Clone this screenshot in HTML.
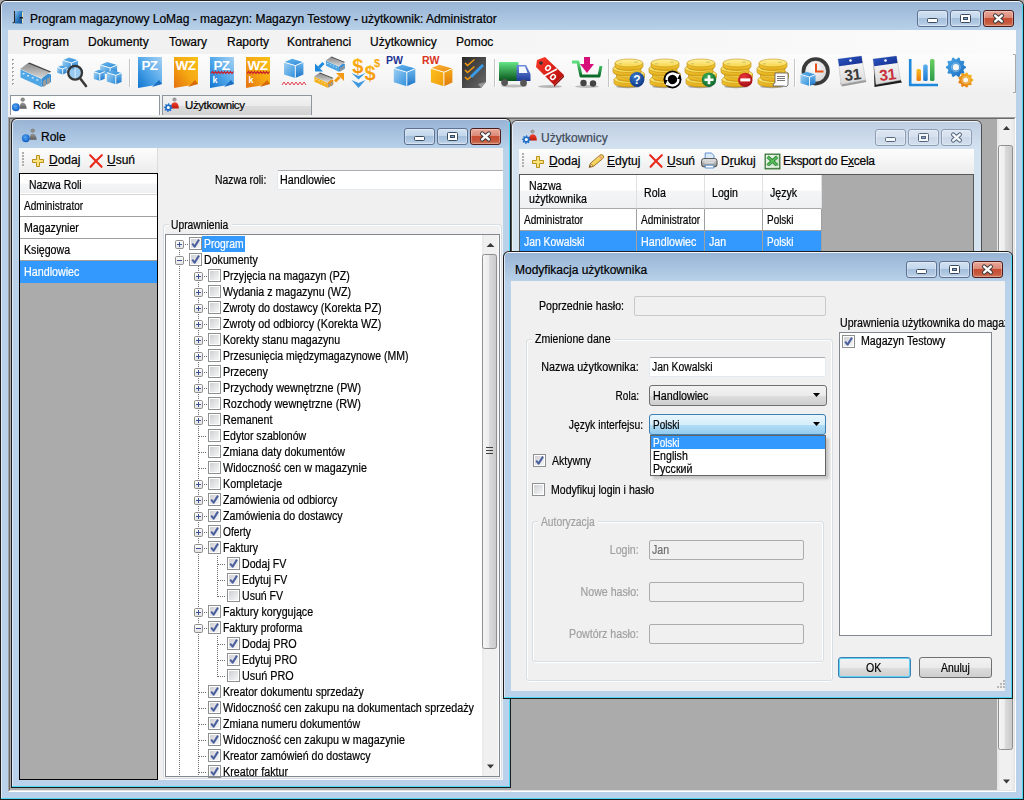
<!DOCTYPE html><html><head><meta charset="utf-8"><style>
*{margin:0;padding:0;box-sizing:border-box}
html,body{width:1024px;height:800px;overflow:hidden;background:#ababab}
body{position:relative;font-family:"Liberation Sans",sans-serif;font-size:12px;color:#000}
.a{position:absolute}
.t{position:absolute;white-space:nowrap;-webkit-text-stroke:0.2px currentColor}
svg{overflow:visible}
</style></head><body><div class="a" style="left:0px;top:0px;width:1024px;height:800px;background:#1e1e1e;border-radius:6px 6px 0 0"></div><div class="a" style="left:1px;top:1px;width:1022px;height:798px;background:linear-gradient(#98b4d5 0px,#b9d2ea 29px,#b9d1ea 100%);border-radius:5px 5px 0 0;border-top:1px solid #f4f8fc;border-left:1px solid #dfe9f5"></div><div class="a" style="left:1022px;top:4px;width:1px;height:795px;background:#4ad9f5"></div><div class="a" style="left:1px;top:798px;width:1022px;height:1px;background:#4ad9f5"></div><svg class="a" style="left:0px;top:0px" width="30" height="30" viewBox="0 0 30 30"><defs><linearGradient id="gApp" x1="0" y1="0" x2="1" y2="1"><stop offset="0" stop-color="#8cc4f4"/><stop offset=".5" stop-color="#2a78c0"/><stop offset="1" stop-color="#0a3f7a"/></linearGradient></defs><rect x="15" y="11" width="7.5" height="12.5" fill="url(#gApp)"/><rect x="22" y="12" width="1" height="11" fill="#e8e4b0"/><path d="M14.5 11V22.2Q14.3 23.2 12.6 22.6" fill="none" stroke="#2a2a2a" stroke-width="1.1"/><rect x="19.5" y="17" width="3.5" height="1.6" rx=".6" fill="#1a1a1a"/></svg><div class="t" style="left:30px;top:12.84px;font-size:12px;line-height:12px;;">Program magazynowy LoMag - magazyn: Magazyn Testowy - użytkownik: Administrator</div><div class="a" style="left:917px;top:10px;width:31px;height:17px;background:linear-gradient(#d3e2f2 0%,#c2d6ec 45%,#a4bfdc 50%,#b0c8e2 80%,#c7daee 100%);border:1px solid #5f7190;border-radius:3px;box-shadow:inset 0 0 0 1px rgba(255,255,255,.3)"></div><div class="a" style="left:950px;top:10px;width:31px;height:17px;background:linear-gradient(#d3e2f2 0%,#c2d6ec 45%,#a4bfdc 50%,#b0c8e2 80%,#c7daee 100%);border:1px solid #5f7190;border-radius:3px;box-shadow:inset 0 0 0 1px rgba(255,255,255,.3)"></div><div class="a" style="left:983px;top:10px;width:31px;height:17px;background:linear-gradient(#eaa99b 0%,#dc8a77 45%,#c84d33 50%,#c55a3f 80%,#d27a5c 100%);border:1px solid #4e1b1b;border-radius:3px;box-shadow:inset 0 0 0 1px rgba(255,255,255,.3)"></div><div class="a" style="left:927px;top:18px;width:11px;height:5px;background:#fff;border:1px solid #3c4a5e;border-radius:1.5px"></div><div class="a" style="left:960px;top:14px;width:11px;height:9px;background:#fff;border:1px solid #3c4a5e;border-radius:1.5px"></div><div class="a" style="left:963px;top:17px;width:5px;height:3px;background:#8aa6c8;border:1px solid #3c4a5e"></div><svg class="a" style="left:983px;top:10px" width="31" height="17" viewBox="0 0 31 17"><path d="M12.2 5.6 L18.8 11.4 M18.8 5.6 L12.2 11.4" stroke="#3a3a3a" stroke-width="4.4" stroke-linecap="round"/><path d="M12.2 5.6 L18.8 11.4 M18.8 5.6 L12.2 11.4" stroke="#fff" stroke-width="2.4" stroke-linecap="round"/></svg><div class="a" style="left:8px;top:30px;width:1008px;height:762px;background:#f0f0f0"></div><div class="a" style="left:8px;top:30px;width:1008px;height:24px;background:linear-gradient(90deg,#efefef,#fbfbfb)"></div><div class="t" style="left:23px;top:35.84px;font-size:12px;line-height:12px;;">Program</div><div class="t" style="left:88px;top:35.84px;font-size:12px;line-height:12px;;">Dokumenty</div><div class="t" style="left:169px;top:35.84px;font-size:12px;line-height:12px;;">Towary</div><div class="t" style="left:227px;top:35.84px;font-size:12px;line-height:12px;;">Raporty</div><div class="t" style="left:287px;top:35.84px;font-size:12px;line-height:12px;;">Kontrahenci</div><div class="t" style="left:370px;top:35.84px;font-size:12px;line-height:12px;;">Użytkownicy</div><div class="t" style="left:456px;top:35.84px;font-size:12px;line-height:12px;;">Pomoc</div><div class="a" style="left:8px;top:54px;width:1008px;height:39px;background:linear-gradient(#fcfcfc,#f8f8f8 45%,#f0f0f0)"></div><svg class="a" style="left:0;top:0" width="1024" height="100" viewBox="0 0 1024 100"><defs>
<linearGradient id="gBt" x1="0" y1="0" x2="1" y2="1"><stop offset="0" stop-color="#68b6ec"/><stop offset="1" stop-color="#2d8bd8"/></linearGradient>
<linearGradient id="gBl" x1="0" y1="0" x2="1" y2="1"><stop offset="0" stop-color="#9fd0f3"/><stop offset="1" stop-color="#2f8fdb"/></linearGradient>
<linearGradient id="gBr" x1="0" y1="0" x2="0" y2="1"><stop offset="0" stop-color="#6cb6ec"/><stop offset="1" stop-color="#1e76c8"/></linearGradient>
<linearGradient id="gOt" x1="0" y1="0" x2="1" y2="1"><stop offset="0" stop-color="#f7b53a"/><stop offset="1" stop-color="#ee8d12"/></linearGradient>
<linearGradient id="gOl" x1="0" y1="0" x2="1" y2="1"><stop offset="0" stop-color="#fbc21e"/><stop offset="1" stop-color="#f29a0c"/></linearGradient>
<linearGradient id="gOr" x1="0" y1="0" x2="0" y2="1"><stop offset="0" stop-color="#f6ab1c"/><stop offset="1" stop-color="#e07a08"/></linearGradient>
<linearGradient id="gRoof" x1="0" y1="0" x2="0" y2="1"><stop offset="0" stop-color="#8b8b8b"/><stop offset="1" stop-color="#d8d8d8"/></linearGradient>
<linearGradient id="gPZ" x1="1" y1="0" x2="0" y2="1"><stop offset="0" stop-color="#a6d2f4"/><stop offset=".5" stop-color="#54a8ea"/><stop offset="1" stop-color="#0f74d0"/></linearGradient>
<linearGradient id="gWZ" x1="1" y1="0" x2="0" y2="1"><stop offset="0" stop-color="#f9c01a"/><stop offset=".5" stop-color="#f5a812"/><stop offset="1" stop-color="#e57010"/></linearGradient>
<linearGradient id="gCoin" x1="0" y1="0" x2="0" y2="1"><stop offset="0" stop-color="#fff3a0"/><stop offset="1" stop-color="#f7d448"/></linearGradient><linearGradient id="gCoinS" x1="0" y1="0" x2="0" y2="1"><stop offset="0" stop-color="#f9d440"/><stop offset="1" stop-color="#e0a818"/></linearGradient>
<radialGradient id="gQ" cx=".4" cy=".3" r=".8"><stop offset="0" stop-color="#3a7ad0"/><stop offset="1" stop-color="#0a2f78"/></radialGradient>
<radialGradient id="gPlus" cx=".4" cy=".3" r=".8"><stop offset="0" stop-color="#3cb25a"/><stop offset="1" stop-color="#0a5a26"/></radialGradient>
<radialGradient id="gMinus" cx=".4" cy=".3" r=".8"><stop offset="0" stop-color="#e8333a"/><stop offset="1" stop-color="#9a0a10"/></radialGradient>
<linearGradient id="gTruck" x1="0" y1="0" x2="0" y2="1"><stop offset="0" stop-color="#64e584"/><stop offset="1" stop-color="#06531a"/></linearGradient>
<linearGradient id="gCab" x1="0" y1="0" x2="0" y2="1"><stop offset="0" stop-color="#6f8ee0"/><stop offset="1" stop-color="#1e3a9a"/></linearGradient>
<linearGradient id="gTag" x1="0" y1="0" x2="1" y2="1"><stop offset="0" stop-color="#ff3a2a"/><stop offset="1" stop-color="#b00a0a"/></linearGradient>
<linearGradient id="gCart" x1="0" y1="0" x2="0" y2="1"><stop offset="0" stop-color="#5ee07e"/><stop offset="1" stop-color="#0a6a28"/></linearGradient>
<linearGradient id="gCal" x1="0" y1="0" x2="0" y2="1"><stop offset="0" stop-color="#ffffff"/><stop offset="1" stop-color="#d8d8d8"/></linearGradient>
<linearGradient id="gCalT" x1="0" y1="0" x2="1" y2="1"><stop offset="0" stop-color="#2a5ac8"/><stop offset="1" stop-color="#152a88"/></linearGradient><radialGradient id="gClk" cx=".4" cy=".35" r=".7"><stop offset="0" stop-color="#ffffff"/><stop offset="1" stop-color="#d0d0d0"/></radialGradient>
<linearGradient id="gCk" x1="0" y1="0" x2="1" y2="1"><stop offset="0" stop-color="#2a2a2a"/><stop offset="1" stop-color="#6a6a6a"/></linearGradient>
<linearGradient id="gDol" x1="0" y1="0" x2="0" y2="1"><stop offset="0" stop-color="#ffc21a"/><stop offset="1" stop-color="#f08a0a"/></linearGradient>
<linearGradient id="gBarO" x1="0" y1="0" x2="0" y2="1"><stop offset="0" stop-color="#f8c020"/><stop offset="1" stop-color="#f07a10"/></linearGradient><linearGradient id="gBarB" x1="0" y1="0" x2="0" y2="1"><stop offset="0" stop-color="#5ab0f0"/><stop offset="1" stop-color="#1a78d0"/></linearGradient><linearGradient id="gBarG" x1="0" y1="0" x2="0" y2="1"><stop offset="0" stop-color="#6ad060"/><stop offset="1" stop-color="#2a9a4a"/></linearGradient>
<linearGradient id="gGb" x1="0" y1="0" x2="1" y2="1"><stop offset="0" stop-color="#4aa8e8"/><stop offset="1" stop-color="#1a6cc0"/></linearGradient><linearGradient id="gGo" x1="1" y1="0" x2="0" y2="1"><stop offset="0" stop-color="#f8c020"/><stop offset="1" stop-color="#e07010"/></linearGradient>
</defs><rect x="12" y="59" width="2" height="2" fill="#a5a5a5"/><rect x="13" y="60" width="1" height="1" fill="#fff"/><rect x="12" y="63" width="2" height="2" fill="#a5a5a5"/><rect x="13" y="64" width="1" height="1" fill="#fff"/><rect x="12" y="67" width="2" height="2" fill="#a5a5a5"/><rect x="13" y="68" width="1" height="1" fill="#fff"/><rect x="12" y="71" width="2" height="2" fill="#a5a5a5"/><rect x="13" y="72" width="1" height="1" fill="#fff"/><rect x="12" y="75" width="2" height="2" fill="#a5a5a5"/><rect x="13" y="76" width="1" height="1" fill="#fff"/><rect x="12" y="79" width="2" height="2" fill="#a5a5a5"/><rect x="13" y="80" width="1" height="1" fill="#fff"/><rect x="12" y="83" width="2" height="2" fill="#a5a5a5"/><rect x="13" y="84" width="1" height="1" fill="#fff"/><polygon points="20.5,69.5 41.5,79 41.5,87 20.5,77.5" fill="#4ea6e4"/><polygon points="41.5,79 46,73 51,74.5 51,82 41.5,87" fill="#3a8fd4"/><polygon points="20,69 27.5,63.5 50,72.5 41.5,78.5" fill="url(#gRoof)"/><polygon points="27.5,63.5 29.5,62.5 51,71.5 50,72.5" fill="#4a4a4a"/><rect x="22.5" y="73.0" width="2" height="1.3" fill="#dff0ff"/><rect x="27.1" y="75.1" width="2" height="1.3" fill="#dff0ff"/><rect x="31.7" y="77.2" width="2" height="1.3" fill="#dff0ff"/><rect x="36.3" y="79.3" width="2" height="1.3" fill="#dff0ff"/><polygon points="43,81 46,79.3 46,85.5 43,87" fill="#9a9a9a"/><polygon points="47,78.7 50,77 50,83 47,84.8" fill="#9a9a9a"/><polygon points="62.5,60.2 69.0,57.5 78.0,60.2 71.5,62.9" fill="url(#gBt)"/><polygon points="62.5,60.2 71.5,62.9 71.5,69.9 62.5,67.2" fill="url(#gBl)"/><polygon points="71.5,62.9 78.0,60.2 78.0,67.2 71.5,69.9" fill="url(#gBr)"/><polyline points="62.5,60.2 71.5,62.9 78.0,60.2" fill="none" stroke="#fff" stroke-width="0.9"/><line x1="71.5" y1="62.9" x2="71.5" y2="69.9" stroke="#fff" stroke-width="0.9"/><polygon points="57.2,67.3 61.2,65.6 66.7,67.2 62.7,68.9" fill="url(#gBt)"/><polygon points="57.2,67.3 62.7,68.9 62.7,74.4 57.2,72.8" fill="url(#gBl)"/><polygon points="62.7,68.9 66.7,67.2 66.7,72.8 62.7,74.4" fill="url(#gBr)"/><polyline points="57.2,67.3 62.7,68.9 66.7,67.2" fill="none" stroke="#fff" stroke-width="0.9"/><line x1="62.7" y1="68.9" x2="62.7" y2="74.4" stroke="#fff" stroke-width="0.9"/><circle cx="75.1" cy="72.7" r="6.9" fill="rgba(120,185,235,.75)"/><path d="M75.1 66V79.4" stroke="#fff" stroke-width=".8" opacity=".8"/><circle cx="75.1" cy="72.7" r="6.9" fill="none" stroke="#363636" stroke-width="2.3"/><path d="M80.6,79 L86,86" stroke="#3a3a3a" stroke-width="2.6" stroke-linecap="round"/><polygon points="100.1,64.9 107.1,62.0 117.1,65.0 110.1,67.9" fill="url(#gBt)"/><polygon points="100.1,64.9 110.1,67.9 110.1,74.9 100.1,71.9" fill="url(#gBl)"/><polygon points="110.1,67.9 117.1,65.0 117.1,72.0 110.1,74.9" fill="url(#gBr)"/><polyline points="100.1,64.9 110.1,67.9 117.1,65.0" fill="none" stroke="#fff" stroke-width="0.9"/><line x1="110.1" y1="67.9" x2="110.1" y2="74.9" stroke="#fff" stroke-width="0.9"/><polygon points="93.8,71.9 98.8,69.8 104.8,71.6 99.8,73.7" fill="url(#gBt)"/><polygon points="93.8,71.9 99.8,73.7 99.8,80.8 93.8,79.0" fill="url(#gBl)"/><polygon points="99.8,73.7 104.8,71.6 104.8,78.7 99.8,80.8" fill="url(#gBr)"/><polyline points="93.8,71.9 99.8,73.7 104.8,71.6" fill="none" stroke="#fff" stroke-width="0.9"/><line x1="99.8" y1="73.7" x2="99.8" y2="80.8" stroke="#fff" stroke-width="0.9"/><polygon points="106.8,72.6 112.6,70.2 121.6,72.9 115.8,75.3" fill="url(#gBt)"/><polygon points="106.8,72.6 115.8,75.3 115.8,84.3 106.8,81.6" fill="url(#gBl)"/><polygon points="115.8,75.3 121.6,72.9 121.6,81.9 115.8,84.3" fill="url(#gBr)"/><polyline points="106.8,72.6 115.8,75.3 121.6,72.9" fill="none" stroke="#fff" stroke-width="0.9"/><line x1="115.8" y1="75.3" x2="115.8" y2="84.3" stroke="#fff" stroke-width="0.9"/><rect x="129" y="59" width="1" height="28" fill="#c4c4c4"/><rect x="130" y="59" width="1" height="28" fill="#fff"/><rect x="494" y="59" width="1" height="28" fill="#c4c4c4"/><rect x="495" y="59" width="1" height="28" fill="#fff"/><rect x="608" y="59" width="1" height="28" fill="#c4c4c4"/><rect x="609" y="59" width="1" height="28" fill="#fff"/><rect x="794" y="59" width="1" height="28" fill="#c4c4c4"/><rect x="795" y="59" width="1" height="28" fill="#fff"/><path d="M138,57 H162 V84 L138,88Z" fill="url(#gPZ)"/><path d="M152,87 Q157,82 159,80 L162,84Z" fill="#1b6fc0"/><text x="149.5" y="70.2" font-family="Liberation Sans" font-weight="bold" font-size="13.5" fill="#fff" text-anchor="middle" letter-spacing="-0.6">PZ</text><path d="M174,57 H198 V84 L174,88Z" fill="url(#gWZ)"/><path d="M188,87 Q193,82 195,80 L198,84Z" fill="#d86a0c"/><text x="185.5" y="70.2" font-family="Liberation Sans" font-weight="bold" font-size="13.5" fill="#fff" text-anchor="middle" letter-spacing="-0.6">WZ</text><path d="M210,57 H234 V84 L210,88Z" fill="url(#gPZ)"/><path d="M224,87 Q229,82 231,80 L234,84Z" fill="#1b6fc0"/><text x="221.5" y="70.2" font-family="Liberation Sans" font-weight="bold" font-size="13.5" fill="#fff" text-anchor="middle" letter-spacing="-0.6">PZ</text><path d="M211,73.5 l1.5,-2 l1.5,2 l1.5,-2 l1.5,2 l1.5,-2 l1.5,2 l1.5,-2 l1.5,2 l1.5,-2 l1.5,2 l1.5,-2 l1.5,2 l1.5,-2 l1.5,2 l1.5,-2" fill="none" stroke="#c8202e" stroke-width="1.2"/><text x="212.5" y="83" font-family="Liberation Sans" font-weight="bold" font-size="9" fill="#fff">k</text><path d="M246,57 H270 V84 L246,88Z" fill="url(#gWZ)"/><path d="M260,87 Q265,82 267,80 L270,84Z" fill="#d86a0c"/><text x="257.5" y="70.2" font-family="Liberation Sans" font-weight="bold" font-size="13.5" fill="#fff" text-anchor="middle" letter-spacing="-0.6">WZ</text><path d="M247,73.5 l1.5,-2 l1.5,2 l1.5,-2 l1.5,2 l1.5,-2 l1.5,2 l1.5,-2 l1.5,2 l1.5,-2 l1.5,2 l1.5,-2 l1.5,2 l1.5,-2 l1.5,2 l1.5,-2" fill="none" stroke="#c8202e" stroke-width="1.2"/><text x="248.5" y="83" font-family="Liberation Sans" font-weight="bold" font-size="9" fill="#fff">k</text><polygon points="284.0,62.2 292.1,58.8 303.4,62.2 295.3,65.6" fill="url(#gBt)"/><polygon points="284.0,62.2 295.3,65.6 295.3,77.9 284.0,74.5" fill="url(#gBl)"/><polygon points="295.3,65.6 303.4,62.2 303.4,74.5 295.3,77.9" fill="url(#gBr)"/><polyline points="284.0,62.2 295.3,65.6 303.4,62.2" fill="none" stroke="#fff" stroke-width="0.9"/><line x1="295.3" y1="65.6" x2="295.3" y2="77.9" stroke="#fff" stroke-width="0.9"/><path d="M282,85 l2,-3 l2,3 l2,-3 l2,3 l2,-3 l2,3 l2,-3 l2,3 l2,-3 l2,3 l2,-3 l2,3" fill="none" stroke="#e04050" stroke-width="1"/><g transform="translate(325,52.5) scale(0.62)"><polygon points="1.5,13.5 22.5,23 22.5,31 1.5,21.5" fill="#4ea6e4"/><polygon points="22.5,23 27,17 32,18.5 32,26 22.5,31" fill="#3a8fd4"/><polygon points="1,13 8.5,7.5 31,16.5 22.5,22.5" fill="url(#gRoof)"/><polygon points="8.5,7.5 10.5,6.5 32,15.5 31,16.5" fill="#4a4a4a"/><rect x="3.5" y="17.0" width="2" height="1.3" fill="#dff0ff"/><rect x="8.1" y="19.1" width="2" height="1.3" fill="#dff0ff"/><rect x="12.7" y="21.2" width="2" height="1.3" fill="#dff0ff"/><rect x="17.3" y="23.3" width="2" height="1.3" fill="#dff0ff"/><polygon points="24,25 27,23.3 27,29.5 24,31" fill="#9a9a9a"/><polygon points="28,22.7 31,21 31,27 28,28.8" fill="#9a9a9a"/></g><g transform="translate(313.5,68.5) scale(0.62)"><polygon points="1.5,13.5 22.5,23 22.5,31 1.5,21.5" fill="#f6b11c"/><polygon points="22.5,23 27,17 32,18.5 32,26 22.5,31" fill="#e8920c"/><polygon points="1,13 8.5,7.5 31,16.5 22.5,22.5" fill="url(#gRoof)"/><polygon points="8.5,7.5 10.5,6.5 32,15.5 31,16.5" fill="#4a4a4a"/><rect x="3.5" y="17.0" width="2" height="1.3" fill="#dff0ff"/><rect x="8.1" y="19.1" width="2" height="1.3" fill="#dff0ff"/><rect x="12.7" y="21.2" width="2" height="1.3" fill="#dff0ff"/><rect x="17.3" y="23.3" width="2" height="1.3" fill="#dff0ff"/><polygon points="24,25 27,23.3 27,29.5 24,31" fill="#9a9a9a"/><polygon points="28,22.7 31,21 31,27 28,28.8" fill="#9a9a9a"/></g><path d="M323.5,63 L319,67.5" stroke="#1e88dc" stroke-width="3"/><path d="M315,63.5 V71.5 H323Z" fill="#1e88dc"/><path d="M335,81.5 L339.5,77" stroke="#f29a12" stroke-width="3"/><path d="M344,73 V81 L336,73Z" fill="#f29a12"/><text x="357.8" y="72.5" font-family="Liberation Sans" font-weight="bold" font-size="20" fill="url(#gDol)" text-anchor="middle">$</text><text x="370" y="79.5" font-family="Liberation Sans" font-weight="bold" font-size="20" fill="url(#gDol)" text-anchor="middle">$</text><text x="377" y="66.5" font-family="Liberation Sans" font-weight="bold" font-size="11" fill="#f5a80e" text-anchor="middle">$</text><path d="M351.5,73 L358.5,79.5 L365.5,73 L358.5,76Z" fill="#3b98e0"/><path d="M351.5,80 L358.5,88 L365.5,80 L358.5,83Z" fill="#3b98e0"/><text x="386" y="64.3" font-family="Liberation Sans" font-weight="bold" font-size="10.5" fill="#1c3590">PW</text><polygon points="393.8,68.3 402.3,64.7 415.3,68.6 406.8,72.2" fill="url(#gBt)"/><polygon points="393.8,68.3 406.8,72.2 406.8,86.2 393.8,82.3" fill="url(#gBl)"/><polygon points="406.8,72.2 415.3,68.6 415.3,82.6 406.8,86.2" fill="url(#gBr)"/><polyline points="393.8,68.3 406.8,72.2 415.3,68.6" fill="none" stroke="#fff" stroke-width="0.9"/><line x1="406.8" y1="72.2" x2="406.8" y2="86.2" stroke="#fff" stroke-width="0.9"/><text x="422" y="64.3" font-family="Liberation Sans" font-weight="bold" font-size="10.5" fill="#d8341c">RW</text><polygon points="430.9,68.3 439.4,64.7 452.4,68.6 443.9,72.2" fill="url(#gOt)"/><polygon points="430.9,68.3 443.9,72.2 443.9,86.2 430.9,82.3" fill="url(#gOl)"/><polygon points="443.9,72.2 452.4,68.6 452.4,82.6 443.9,86.2" fill="url(#gOr)"/><polyline points="430.9,68.3 443.9,72.2 452.4,68.6" fill="none" stroke="#fff" stroke-width="0.9"/><line x1="443.9" y1="72.2" x2="443.9" y2="86.2" stroke="#fff" stroke-width="0.9"/><path d="M462,57 H486 V82 L481,88 H462Z" fill="url(#gCk)"/><path d="M486,82 L481,88 L478,84Z" fill="#9a9a9a"/><path d="M465,63 l2.5,2.5 l7,-6" fill="none" stroke="#f09a12" stroke-width="1.6"/><path d="M465,70 l2.5,2.5 l7,-6" fill="none" stroke="#f09a12" stroke-width="1.6"/><path d="M465,77 l2.5,2.5 l7,-6" fill="none" stroke="#f09a12" stroke-width="1.6"/><path d="M471,77 L483,65" stroke="#3a9ae6" stroke-width="3"/><ellipse cx="514" cy="86" rx="13" ry="1.5" fill="rgba(0,0,0,.22)"/><rect x="499" y="62" width="19.5" height="19" rx="1" fill="url(#gTruck)"/><path d="M516.5,65 H526 L530.5,74 V81 H516.5Z" fill="url(#gCab)"/><path d="M519,66.5 H525 L527.5,73 H519Z" fill="#f4f8ff"/><circle cx="504.6" cy="82.5" r="3.4" fill="#555"/><circle cx="523.5" cy="83" r="3.4" fill="#555"/><ellipse cx="550" cy="86.5" rx="12" ry="1.5" fill="rgba(0,0,0,.25)"/><path d="M537,60 L545,57 L564,75 L554,85 L536,67Z" fill="url(#gTag)"/><path d="M564,75 L564,77 L554,87 L554,85Z" fill="#8a0a0a"/><circle cx="541" cy="63" r="1.8" fill="#333"/><ellipse cx="548" cy="68" rx="2" ry="2.6" transform="rotate(45 548 68)" fill="none" stroke="#fff" stroke-width="1.5"/><ellipse cx="553" cy="77" rx="2" ry="2.6" transform="rotate(45 553 77)" fill="none" stroke="#fff" stroke-width="1.5"/><path d="M544,76 L557,69" stroke="#fff" stroke-width="1.5"/><ellipse cx="587" cy="86.5" rx="12" ry="1.5" fill="rgba(0,0,0,.22)"/><path d="M572,62 H578 L581,76 H599 L601,66" fill="none" stroke="url(#gCart)" stroke-width="3" stroke-linejoin="round"/><path d="M584,57 H590 V64 H594 L587,73 L580,64 H584Z" fill="#d8107a"/><circle cx="583.5" cy="83" r="3.2" fill="#444"/><circle cx="593" cy="83.5" r="3.2" fill="#444"/><ellipse cx="628" cy="86.8" rx="12" ry="1.5" fill="rgba(0,0,0,.3)"/><path d="M614,79.5 v3.5 a14,4 0 0 0 28,0 v-3.5Z" fill="url(#gCoinS)" stroke="#b8860a" stroke-width=".6"/><ellipse cx="628" cy="79.5" rx="14" ry="4" fill="url(#gCoin)" stroke="#c29210" stroke-width=".6"/><path d="M618,80.3 h3 M633,78.7 h4" stroke="#a0a050" stroke-width=".8" opacity=".6"/><path d="M616.5,74 v3.5 a14,4 0 0 0 28,0 v-3.5Z" fill="url(#gCoinS)" stroke="#b8860a" stroke-width=".6"/><ellipse cx="630.5" cy="74" rx="14" ry="4" fill="url(#gCoin)" stroke="#c29210" stroke-width=".6"/><path d="M620.5,74.8 h3 M635.5,73.2 h4" stroke="#a0a050" stroke-width=".8" opacity=".6"/><path d="M613,68.5 v3.5 a14,4 0 0 0 28,0 v-3.5Z" fill="url(#gCoinS)" stroke="#b8860a" stroke-width=".6"/><ellipse cx="627" cy="68.5" rx="14" ry="4" fill="url(#gCoin)" stroke="#c29210" stroke-width=".6"/><path d="M617,69.3 h3 M632,67.7 h4" stroke="#a0a050" stroke-width=".8" opacity=".6"/><path d="M615,63 v3.5 a14,4 0 0 0 28,0 v-3.5Z" fill="url(#gCoinS)" stroke="#b8860a" stroke-width=".6"/><ellipse cx="629" cy="63" rx="14" ry="4" fill="url(#gCoin)" stroke="#c29210" stroke-width=".6"/><path d="M619,63.8 h3 M634,62.2 h4" stroke="#a0a050" stroke-width=".8" opacity=".6"/><circle cx="637" cy="79.5" r="7.4" fill="url(#gQ)"/><text x="637" y="84.3" font-family="Liberation Sans" font-weight="bold" font-size="12" fill="#fff" text-anchor="middle">?</text><ellipse cx="664" cy="86.8" rx="12" ry="1.5" fill="rgba(0,0,0,.3)"/><path d="M650,79.5 v3.5 a14,4 0 0 0 28,0 v-3.5Z" fill="url(#gCoinS)" stroke="#b8860a" stroke-width=".6"/><ellipse cx="664" cy="79.5" rx="14" ry="4" fill="url(#gCoin)" stroke="#c29210" stroke-width=".6"/><path d="M654,80.3 h3 M669,78.7 h4" stroke="#a0a050" stroke-width=".8" opacity=".6"/><path d="M652.5,74 v3.5 a14,4 0 0 0 28,0 v-3.5Z" fill="url(#gCoinS)" stroke="#b8860a" stroke-width=".6"/><ellipse cx="666.5" cy="74" rx="14" ry="4" fill="url(#gCoin)" stroke="#c29210" stroke-width=".6"/><path d="M656.5,74.8 h3 M671.5,73.2 h4" stroke="#a0a050" stroke-width=".8" opacity=".6"/><path d="M649,68.5 v3.5 a14,4 0 0 0 28,0 v-3.5Z" fill="url(#gCoinS)" stroke="#b8860a" stroke-width=".6"/><ellipse cx="663" cy="68.5" rx="14" ry="4" fill="url(#gCoin)" stroke="#c29210" stroke-width=".6"/><path d="M653,69.3 h3 M668,67.7 h4" stroke="#a0a050" stroke-width=".8" opacity=".6"/><path d="M651,63 v3.5 a14,4 0 0 0 28,0 v-3.5Z" fill="url(#gCoinS)" stroke="#b8860a" stroke-width=".6"/><ellipse cx="665" cy="63" rx="14" ry="4" fill="url(#gCoin)" stroke="#c29210" stroke-width=".6"/><path d="M655,63.8 h3 M670,62.2 h4" stroke="#a0a050" stroke-width=".8" opacity=".6"/><circle cx="672.5" cy="79.5" r="9" fill="#000"/><path d="M666.7,80.0 A5.8,5.8 0 0 1 676.7,75.5" fill="none" stroke="#fff" stroke-width="2.4"/><path d="M674.0,73.0 L679.7,74.0 L677.5,79.0Z" fill="#fff"/><path d="M678.3,79.0 A5.8,5.8 0 0 1 668.3,83.5" fill="none" stroke="#fff" stroke-width="2.4"/><path d="M671.0,86.0 L665.3,85.0 L667.5,80.0Z" fill="#fff"/><ellipse cx="700" cy="86.8" rx="12" ry="1.5" fill="rgba(0,0,0,.3)"/><path d="M686,79.5 v3.5 a14,4 0 0 0 28,0 v-3.5Z" fill="url(#gCoinS)" stroke="#b8860a" stroke-width=".6"/><ellipse cx="700" cy="79.5" rx="14" ry="4" fill="url(#gCoin)" stroke="#c29210" stroke-width=".6"/><path d="M690,80.3 h3 M705,78.7 h4" stroke="#a0a050" stroke-width=".8" opacity=".6"/><path d="M688.5,74 v3.5 a14,4 0 0 0 28,0 v-3.5Z" fill="url(#gCoinS)" stroke="#b8860a" stroke-width=".6"/><ellipse cx="702.5" cy="74" rx="14" ry="4" fill="url(#gCoin)" stroke="#c29210" stroke-width=".6"/><path d="M692.5,74.8 h3 M707.5,73.2 h4" stroke="#a0a050" stroke-width=".8" opacity=".6"/><path d="M685,68.5 v3.5 a14,4 0 0 0 28,0 v-3.5Z" fill="url(#gCoinS)" stroke="#b8860a" stroke-width=".6"/><ellipse cx="699" cy="68.5" rx="14" ry="4" fill="url(#gCoin)" stroke="#c29210" stroke-width=".6"/><path d="M689,69.3 h3 M704,67.7 h4" stroke="#a0a050" stroke-width=".8" opacity=".6"/><path d="M687,63 v3.5 a14,4 0 0 0 28,0 v-3.5Z" fill="url(#gCoinS)" stroke="#b8860a" stroke-width=".6"/><ellipse cx="701" cy="63" rx="14" ry="4" fill="url(#gCoin)" stroke="#c29210" stroke-width=".6"/><path d="M691,63.8 h3 M706,62.2 h4" stroke="#a0a050" stroke-width=".8" opacity=".6"/><circle cx="709" cy="79.7" r="7.2" fill="url(#gPlus)"/><path d="M704.5,79.7 h9 M709,75.2 v9" stroke="#fff" stroke-width="2.6"/><ellipse cx="736" cy="86.8" rx="12" ry="1.5" fill="rgba(0,0,0,.3)"/><path d="M722,79.5 v3.5 a14,4 0 0 0 28,0 v-3.5Z" fill="url(#gCoinS)" stroke="#b8860a" stroke-width=".6"/><ellipse cx="736" cy="79.5" rx="14" ry="4" fill="url(#gCoin)" stroke="#c29210" stroke-width=".6"/><path d="M726,80.3 h3 M741,78.7 h4" stroke="#a0a050" stroke-width=".8" opacity=".6"/><path d="M724.5,74 v3.5 a14,4 0 0 0 28,0 v-3.5Z" fill="url(#gCoinS)" stroke="#b8860a" stroke-width=".6"/><ellipse cx="738.5" cy="74" rx="14" ry="4" fill="url(#gCoin)" stroke="#c29210" stroke-width=".6"/><path d="M728.5,74.8 h3 M743.5,73.2 h4" stroke="#a0a050" stroke-width=".8" opacity=".6"/><path d="M721,68.5 v3.5 a14,4 0 0 0 28,0 v-3.5Z" fill="url(#gCoinS)" stroke="#b8860a" stroke-width=".6"/><ellipse cx="735" cy="68.5" rx="14" ry="4" fill="url(#gCoin)" stroke="#c29210" stroke-width=".6"/><path d="M725,69.3 h3 M740,67.7 h4" stroke="#a0a050" stroke-width=".8" opacity=".6"/><path d="M723,63 v3.5 a14,4 0 0 0 28,0 v-3.5Z" fill="url(#gCoinS)" stroke="#b8860a" stroke-width=".6"/><ellipse cx="737" cy="63" rx="14" ry="4" fill="url(#gCoin)" stroke="#c29210" stroke-width=".6"/><path d="M727,63.8 h3 M742,62.2 h4" stroke="#a0a050" stroke-width=".8" opacity=".6"/><circle cx="745.3" cy="79.9" r="7.2" fill="url(#gMinus)"/><rect x="740.3" y="78.4" width="10" height="3" fill="#fff"/><ellipse cx="772" cy="86.8" rx="12" ry="1.5" fill="rgba(0,0,0,.3)"/><path d="M758,79.5 v3.5 a14,4 0 0 0 28,0 v-3.5Z" fill="url(#gCoinS)" stroke="#b8860a" stroke-width=".6"/><ellipse cx="772" cy="79.5" rx="14" ry="4" fill="url(#gCoin)" stroke="#c29210" stroke-width=".6"/><path d="M762,80.3 h3 M777,78.7 h4" stroke="#a0a050" stroke-width=".8" opacity=".6"/><path d="M760.5,74 v3.5 a14,4 0 0 0 28,0 v-3.5Z" fill="url(#gCoinS)" stroke="#b8860a" stroke-width=".6"/><ellipse cx="774.5" cy="74" rx="14" ry="4" fill="url(#gCoin)" stroke="#c29210" stroke-width=".6"/><path d="M764.5,74.8 h3 M779.5,73.2 h4" stroke="#a0a050" stroke-width=".8" opacity=".6"/><path d="M757,68.5 v3.5 a14,4 0 0 0 28,0 v-3.5Z" fill="url(#gCoinS)" stroke="#b8860a" stroke-width=".6"/><ellipse cx="771" cy="68.5" rx="14" ry="4" fill="url(#gCoin)" stroke="#c29210" stroke-width=".6"/><path d="M761,69.3 h3 M776,67.7 h4" stroke="#a0a050" stroke-width=".8" opacity=".6"/><path d="M759,63 v3.5 a14,4 0 0 0 28,0 v-3.5Z" fill="url(#gCoinS)" stroke="#b8860a" stroke-width=".6"/><ellipse cx="773" cy="63" rx="14" ry="4" fill="url(#gCoin)" stroke="#c29210" stroke-width=".6"/><path d="M763,63.8 h3 M778,62.2 h4" stroke="#a0a050" stroke-width=".8" opacity=".6"/><path d="M775,73 h13 v12 q-2,3 -4,1 h-11 q0,-3 2,-3Z" fill="#fff" stroke="#555" stroke-width=".8"/><path d="M777,76.5h8M777,78.5h8M777,80.5h8" stroke="#555" stroke-width=".8"/><circle cx="815.7" cy="71.3" r="12.3" fill="url(#gClk)" stroke="#3a3a3a" stroke-width="3.6"/><path d="M816,63.5 V71.5 H823.5" fill="none" stroke="#e8501a" stroke-width="2"/><polygon points="800.5,74.3 806.5,71.8 815.5,74.5 809.5,77.0" fill="url(#gBt)"/><polygon points="800.5,74.3 809.5,77.0 809.5,86.0 800.5,83.3" fill="url(#gBl)"/><polygon points="809.5,77.0 815.5,74.5 815.5,83.5 809.5,86.0" fill="url(#gBr)"/><polyline points="800.5,74.3 809.5,77.0 815.5,74.5" fill="none" stroke="#fff" stroke-width="0.9"/><line x1="809.5" y1="77.0" x2="809.5" y2="86.0" stroke="#fff" stroke-width="0.9"/><path d="M840,83 L842,86.5 L866.5,82 L865,79Z" fill="#9a9a9a"/><path d="M838,59 L861.5,56 L865.5,80 L841,84.5Z" fill="url(#gCal)" stroke="#b8b8b8" stroke-width=".5"/><path d="M838,59 L861.5,56 L862.5,63 L839.2,66.3Z" fill="url(#gCalT)"/><circle cx="850.5" cy="60.5" r="1.3" fill="#fff"/><text x="852.5" y="80" font-family="Liberation Sans" font-weight="bold" font-size="15.5" fill="#3a3a3a" text-anchor="middle" letter-spacing="-0.3" transform="rotate(-7 852 74)">31</text><path d="M873.5,60 L874.5,87 L902,82.5 L900,79Z" fill="#1a1a1a"/><path d="M873,59 L896.5,56 L900.5,80 L876,84.5Z" fill="url(#gCal)" stroke="#b8b8b8" stroke-width=".5"/><path d="M873,59 L896.5,56 L897.5,63 L874.2,66.3Z" fill="url(#gCalT)"/><circle cx="885.5" cy="60.5" r="1.3" fill="#fff"/><text x="887.5" y="80" font-family="Liberation Sans" font-weight="bold" font-size="15.5" fill="#c8303a" text-anchor="middle" letter-spacing="-0.3" transform="rotate(-7 887 74)">31</text><path d="M910.2,59 V85 H938" fill="none" stroke="#1e88dc" stroke-width="2.6"/><rect x="916.5" y="69" width="4.5" height="12" rx="1.5" fill="url(#gBarO)"/><rect x="923.2" y="64.5" width="4.5" height="16.5" rx="1.5" fill="url(#gBarB)"/><rect x="930" y="59" width="4.5" height="22" rx="1.5" fill="url(#gBarG)"/><polygon points="965.87,66.52 965.87,68.08 963.87,69.21 963.48,70.44 964.43,72.52 963.50,73.79 961.23,73.54 960.18,74.29 959.73,76.54 958.23,77.02 956.54,75.47 955.26,75.47 953.57,77.02 952.07,76.54 951.62,74.29 950.57,73.54 948.30,73.79 947.37,72.52 948.32,70.44 947.93,69.21 945.93,68.08 945.93,66.52 947.93,65.39 948.32,64.16 947.37,62.08 948.30,60.81 950.57,61.06 951.62,60.31 952.07,58.06 953.57,57.58 955.26,59.13 956.54,59.13 958.23,57.58 959.73,58.06 960.18,60.31 961.23,61.06 963.50,60.81 964.43,62.08 963.48,64.16 963.87,65.39" fill="url(#gGb)"/><circle cx="955.9" cy="67.3" r="4.4" fill="none" stroke="rgba(255,255,255,.35)" stroke-width="1"/><circle cx="955.9" cy="67.3" r="3.2" fill="#f6f6f6"/><polygon points="973.17,79.34 973.17,80.66 971.59,81.60 971.22,82.62 971.83,84.36 970.97,85.37 969.16,85.08 968.22,85.62 967.57,87.34 966.26,87.57 965.06,86.18 964.00,85.99 962.39,86.89 961.24,86.23 961.22,84.38 960.52,83.56 958.71,83.21 958.26,81.97 959.42,80.54 959.42,79.46 958.26,78.03 958.71,76.79 960.52,76.44 961.22,75.62 961.24,73.77 962.39,73.11 964.00,74.01 965.06,73.82 966.26,72.43 967.57,72.66 968.22,74.38 969.16,74.92 970.97,74.63 971.83,75.64 971.22,77.38 971.59,78.40" fill="url(#gGo)"/><circle cx="965.6" cy="80" r="3.7" fill="none" stroke="rgba(255,255,255,.35)" stroke-width="1"/><circle cx="965.6" cy="80" r="2.5" fill="#f6f6f6"/><path d="M1013 54.5h2.5V93M1013 92.5h2.5" fill="none" stroke="#a8a8a8"/></svg><div class="a" style="left:10px;top:95px;width:150px;height:20px;background:#fff;border:1px solid #8d95a0;border-bottom:none"></div><div class="a" style="left:162px;top:95px;width:150px;height:20px;background:linear-gradient(#f3f3f3 0%,#ebebeb 50%,#dddddd 51%,#d2d2d2 100%);border:1px solid #8d95a0;border-bottom:none"></div><svg class="a" style="left:12px;top:97px" width="17" height="15" viewBox="0 0 17 15"><defs><radialGradient id="gRb" cx=".4" cy=".35" r=".7"><stop offset="0" stop-color="#4aa0f0"/><stop offset="1" stop-color="#0a58c0"/></radialGradient><linearGradient id="gRp" x1="0" y1="0" x2="0" y2="1"><stop offset="0" stop-color="#9a9a9a"/><stop offset="1" stop-color="#5a5a5a"/></linearGradient></defs><circle cx="10.7" cy="2.6" r="2.2" fill="#8a8a8a"/><path d="M7.6 11.8 Q7.6 5.6 10.7 5.6 Q13.8 5.6 14.8 11.8Z" fill="url(#gRp)"/><ellipse cx="3.8" cy="10.3" rx="3.9" ry="4" fill="url(#gRb)"/><path d="M2 9.5h3M3 11.5h2.5" stroke="#7fc0ff" stroke-width=".6" opacity=".6"/></svg><svg class="a" style="left:164px;top:97px" width="17" height="15" viewBox="0 0 17 15"><defs><linearGradient id="gUr" x1="0" y1="0" x2="0" y2="1"><stop offset="0" stop-color="#f04030"/><stop offset="1" stop-color="#c01808"/></linearGradient></defs><circle cx="10.5" cy="2.5" r="2.1" fill="#9a9a9a"/><path d="M6.8 11.6 Q7 5.3 10.8 5.3 Q14.6 5.3 14.9 11.6Z" fill="url(#gUr)"/><polygon points="8.70,10.60 8.62,11.46 7.26,11.82 6.96,12.38 7.41,13.71 6.74,14.26 5.52,13.56 4.92,13.74 4.30,15.00 3.44,14.92 3.08,13.56 2.52,13.26 1.19,13.71 0.64,13.04 1.34,11.82 1.16,11.22 -0.10,10.60 -0.02,9.74 1.34,9.38 1.64,8.82 1.19,7.49 1.86,6.94 3.08,7.64 3.68,7.46 4.30,6.20 5.16,6.28 5.52,7.64 6.08,7.94 7.41,7.49 7.96,8.16 7.26,9.38 7.44,9.98" fill="#1f6fc8"/><circle cx="4.3" cy="10.6" r="1.5" fill="#fff"/></svg><div class="t" style="left:33px;top:100.27px;font-size:11.5px;line-height:11.5px;;letter-spacing:-0.4px;">Role</div><div class="t" style="left:185px;top:100.27px;font-size:11.5px;line-height:11.5px;;letter-spacing:-0.4px;">Użytkownicy</div><div class="a" style="left:8px;top:117px;width:1008px;height:675px;background:#ababab;border-top:1px solid #a0a0a0;border-left:1px solid #a0a0a0;border-right:1px solid #fff;border-bottom:1px solid #fff"></div><div class="a" style="left:9px;top:118px;width:1006px;height:673px;border-top:1px solid #696969;border-left:1px solid #696969;border-right:1px solid #e3e3e3;border-bottom:1px solid #e3e3e3"></div><div class="a" style="left:997px;top:119px;width:17px;height:671px;background:linear-gradient(90deg,#e3e3e3,#f0f0f0 20%,#f0f0f0 80%,#e8e8e8)"></div><svg class="a" style="left:997px;top:119px" width="17" height="671"><defs><linearGradient id="thg2" x1="0" x2="1"><stop offset="0" stop-color="#f6f6f6"/><stop offset=".45" stop-color="#ececec"/><stop offset=".5" stop-color="#dadadb"/><stop offset="1" stop-color="#c9c9cb"/></linearGradient></defs><path d="M6 11 L9.5 7 L13 11Z" fill="#3a3a3a"/><rect x="1.5" y="26.5" width="14" height="604" rx="2" fill="url(#thg2)" stroke="#8f8f8f"/><path d="M6 660.5 L9.5 664.5 L13 660.5Z" fill="#3a3a3a"/></svg><div class="a" style="left:11px;top:118px;width:500px;height:670px;background:#1e1e1e;border-radius:6px 6px 0 0"></div><div class="a" style="left:12px;top:119px;width:498px;height:668px;background:linear-gradient(#98b4d5 0px,#b9d2ea 29px,#b9d1ea 100%);border-radius:5px 5px 0 0;border-top:1px solid #f4f8fc;border-left:1px solid #dfe9f5"></div><div class="a" style="left:509px;top:122px;width:1px;height:665px;background:#4ad9f5"></div><div class="a" style="left:12px;top:786px;width:498px;height:1px;background:#4ad9f5"></div><svg class="a" style="left:22px;top:128px" width="17" height="15" viewBox="0 0 17 15"><defs><radialGradient id="gRb" cx=".4" cy=".35" r=".7"><stop offset="0" stop-color="#4aa0f0"/><stop offset="1" stop-color="#0a58c0"/></radialGradient><linearGradient id="gRp" x1="0" y1="0" x2="0" y2="1"><stop offset="0" stop-color="#9a9a9a"/><stop offset="1" stop-color="#5a5a5a"/></linearGradient></defs><circle cx="10.7" cy="2.6" r="2.2" fill="#8a8a8a"/><path d="M7.6 11.8 Q7.6 5.6 10.7 5.6 Q13.8 5.6 14.8 11.8Z" fill="url(#gRp)"/><ellipse cx="3.8" cy="10.3" rx="3.9" ry="4" fill="url(#gRb)"/><path d="M2 9.5h3M3 11.5h2.5" stroke="#7fc0ff" stroke-width=".6" opacity=".6"/></svg><div class="t" style="left:41px;top:130.84px;font-size:12px;line-height:12px;;">Role</div><div class="a" style="left:404px;top:128px;width:31px;height:17px;background:linear-gradient(#d3e2f2 0%,#c2d6ec 45%,#a4bfdc 50%,#b0c8e2 80%,#c7daee 100%);border:1px solid #5f7190;border-radius:3px;box-shadow:inset 0 0 0 1px rgba(255,255,255,.3)"></div><div class="a" style="left:437px;top:128px;width:31px;height:17px;background:linear-gradient(#d3e2f2 0%,#c2d6ec 45%,#a4bfdc 50%,#b0c8e2 80%,#c7daee 100%);border:1px solid #5f7190;border-radius:3px;box-shadow:inset 0 0 0 1px rgba(255,255,255,.3)"></div><div class="a" style="left:470px;top:128px;width:31px;height:17px;background:linear-gradient(#eaa99b 0%,#dc8a77 45%,#c84d33 50%,#c55a3f 80%,#d27a5c 100%);border:1px solid #4e1b1b;border-radius:3px;box-shadow:inset 0 0 0 1px rgba(255,255,255,.3)"></div><div class="a" style="left:414px;top:136px;width:11px;height:5px;background:#fff;border:1px solid #3c4a5e;border-radius:1.5px"></div><div class="a" style="left:447px;top:132px;width:11px;height:9px;background:#fff;border:1px solid #3c4a5e;border-radius:1.5px"></div><div class="a" style="left:450px;top:135px;width:5px;height:3px;background:#8aa6c8;border:1px solid #3c4a5e"></div><svg class="a" style="left:470px;top:128px" width="31" height="17" viewBox="0 0 31 17"><path d="M12.2 5.6 L18.8 11.4 M18.8 5.6 L12.2 11.4" stroke="#3a3a3a" stroke-width="4.4" stroke-linecap="round"/><path d="M12.2 5.6 L18.8 11.4 M18.8 5.6 L12.2 11.4" stroke="#fff" stroke-width="2.4" stroke-linecap="round"/></svg><div class="a" style="left:19px;top:148px;width:484px;height:632px;background:#f0f0f0"></div><div class="a" style="left:19px;top:148px;width:139px;height:25px;background:linear-gradient(#fdfdfd,#f3f3f3 60%,#ececec);border-right:1px solid #dcdcdc"></div><svg class="a" style="left:22px;top:152px" width="3" height="16" viewBox="0 0 3 16"><rect x="0" y="0" width="2" height="2" fill="#b0b0b0"/><rect x="0" y="3" width="2" height="2" fill="#b0b0b0"/><rect x="0" y="6" width="2" height="2" fill="#b0b0b0"/><rect x="0" y="9" width="2" height="2" fill="#b0b0b0"/><rect x="0" y="12" width="2" height="2" fill="#b0b0b0"/></svg><svg class="a" style="left:32px;top:155px" width="12" height="12" viewBox="0 0 12 12"><path d="M4.5 0.5H7.5V4.5H11.5V7.5H7.5V11.5H4.5V7.5H0.5V4.5H4.5Z" fill="#fae27c" stroke="#b8901a"/></svg><div class="t" style="left:49px;top:153.84px;font-size:12px;line-height:12px;;"><u>D</u>odaj</div><svg class="a" style="left:89px;top:154px" width="14" height="14" viewBox="0 0 14 14"><path d="M1.2 1.2 Q6 6 12.6 12.8 M12.8 1.2 Q7 6.5 1.6 12.8" fill="none" stroke="#e8281c" stroke-width="2.1" stroke-linecap="round"/></svg><div class="t" style="left:107px;top:153.84px;font-size:12px;line-height:12px;;"><u>U</u>suń</div><div class="a" style="left:19px;top:173px;width:139px;height:607px;background:#ababab;border:1px solid #000"></div><div class="a" style="left:20px;top:174px;width:137px;height:21px;background:linear-gradient(#fff 0,#fff 45%,#f4f5f7 50%,#eff0f2 100%);border-bottom:1px solid #d5d5d5"></div><div class="a" style="left:20px;top:193px;width:137px;height:1px;background:#fff"></div><div class="t" style="left:29px;top:178.84px;font-size:12px;line-height:12px;transform:scaleX(0.8672);transform-origin:0 0;">Nazwa Roli</div><div class="a" style="left:20px;top:195px;width:137px;height:22px;background:#fff;border-bottom:1px solid #a0a0a0"></div><div class="t" style="left:24px;top:199.84px;font-size:12px;line-height:12px;transform:scaleX(0.8366);transform-origin:0 0;">Administrator</div><div class="a" style="left:20px;top:217px;width:137px;height:22px;background:#fff;border-bottom:1px solid #a0a0a0"></div><div class="t" style="left:24px;top:221.84px;font-size:12px;line-height:12px;transform:scaleX(0.8850);transform-origin:0 0;">Magazynier</div><div class="a" style="left:20px;top:239px;width:137px;height:22px;background:#fff;border-bottom:1px solid #a0a0a0"></div><div class="t" style="left:24px;top:243.84px;font-size:12px;line-height:12px;transform:scaleX(0.8850);transform-origin:0 0;">Księgowa</div><div class="a" style="left:20px;top:261px;width:137px;height:22px;background:#3399ff;border-bottom:1px solid #3399ff"></div><div class="t" style="left:24px;top:265.84px;font-size:12px;line-height:12px;transform:scaleX(0.8935);transform-origin:0 0;color:#fff">Handlowiec</div><div class="t" style="left:215px;top:173.84px;font-size:12px;line-height:12px;transform:scaleX(0.8644);transform-origin:0 0;">Nazwa roli:</div><div class="a" style="left:277px;top:170px;width:226px;height:20px;background:#fff;border:1px solid #e3e9ef;border-top-color:#abadb3;border-right:none;border-radius:2px 0 0 2px"></div><div class="t" style="left:280px;top:173.84px;font-size:12px;line-height:12px;transform:scaleX(0.8935);transform-origin:0 0;">Handlowiec</div><div class="a" style="left:164px;top:225px;width:337px;height:555px;border:1px solid #fff;border-radius:3px"></div><div class="a" style="left:163px;top:224px;width:339px;height:555px;border:1px solid #d5dfe5;border-radius:3px"></div><div class="a" style="left:169px;top:218px;width:63px;height:10px;background:#f0f0f0"></div><div class="t" style="left:171px;top:218.84px;font-size:12px;line-height:12px;transform:scaleX(0.8567);transform-origin:0 0;">Uprawnienia</div><svg class="a" style="left:165px;top:234px" width="335" height="543" viewBox="165 234 335 543"><defs><linearGradient id="cbg" x1="0" y1="0" x2="1" y2="1"><stop offset="0" stop-color="#cdd0d4"/><stop offset="1" stop-color="#f6f6f6"/></linearGradient><linearGradient id="ebg" x1="0" y1="0" x2="0" y2="1"><stop offset="0" stop-color="#fff"/><stop offset="1" stop-color="#e2e2e2"/></linearGradient></defs><rect x="165" y="234" width="335" height="543" fill="#fff"/><path d="M185 244.5H188M185 260.5H188M204 276.5H207M204 292.5H207M204 308.5H207M204 324.5H207M204 340.5H207M204 356.5H207M204 372.5H207M204 388.5H207M204 404.5H207M204 420.5H207M199 436.5H207M199 452.5H207M199 468.5H207M204 484.5H207M204 500.5H207M204 516.5H207M204 532.5H207M204 548.5H207M218 564.5H226M218 580.5H226M218 596.5H226M204 612.5H207M204 628.5H207M218 644.5H226M218 660.5H226M218 676.5H226M199 692.5H207M199 708.5H207M199 724.5H207M199 740.5H207M199 756.5H207M199 772.5H207M179.5 250V777M198.5 266V777M217.5 556V597M217.5 636V677" stroke="#6e6e6e" stroke-width="1" stroke-dasharray="1 1" fill="none"/><rect x="175.5" y="240.5" width="8" height="8" rx="1.2" fill="url(#ebg)" stroke="#8d8d8d"/><path d="M177 244.5H182" stroke="#3c5193" stroke-width="1"/><path d="M179.5 242V247" stroke="#3c5193" stroke-width="1"/><g transform="translate(189,237)"><rect x="0.5" y="0.5" width="12" height="12" fill="#fff" stroke="#8e8f8f"/><rect x="2" y="2" width="9" height="9" fill="url(#cbg)"/><path d="M3.2 6.6 L5.6 9.6 L10 2.6" fill="none" stroke="#4a5f9e" stroke-width="2" stroke-linejoin="round"/></g><rect x="175.5" y="256.5" width="8" height="8" rx="1.2" fill="url(#ebg)" stroke="#8d8d8d"/><path d="M177 260.5H182" stroke="#3c5193" stroke-width="1"/><g transform="translate(189,253)"><rect x="0.5" y="0.5" width="12" height="12" fill="#fff" stroke="#8e8f8f"/><rect x="2" y="2" width="9" height="9" fill="url(#cbg)"/><path d="M3.2 6.6 L5.6 9.6 L10 2.6" fill="none" stroke="#4a5f9e" stroke-width="2" stroke-linejoin="round"/></g><rect x="194.5" y="272.5" width="8" height="8" rx="1.2" fill="url(#ebg)" stroke="#8d8d8d"/><path d="M196 276.5H201" stroke="#3c5193" stroke-width="1"/><path d="M198.5 274V279" stroke="#3c5193" stroke-width="1"/><g transform="translate(208,269)"><rect x="0.5" y="0.5" width="12" height="12" fill="#fff" stroke="#8e8f8f"/><rect x="2" y="2" width="9" height="9" fill="url(#cbg)"/></g><rect x="194.5" y="288.5" width="8" height="8" rx="1.2" fill="url(#ebg)" stroke="#8d8d8d"/><path d="M196 292.5H201" stroke="#3c5193" stroke-width="1"/><path d="M198.5 290V295" stroke="#3c5193" stroke-width="1"/><g transform="translate(208,285)"><rect x="0.5" y="0.5" width="12" height="12" fill="#fff" stroke="#8e8f8f"/><rect x="2" y="2" width="9" height="9" fill="url(#cbg)"/></g><rect x="194.5" y="304.5" width="8" height="8" rx="1.2" fill="url(#ebg)" stroke="#8d8d8d"/><path d="M196 308.5H201" stroke="#3c5193" stroke-width="1"/><path d="M198.5 306V311" stroke="#3c5193" stroke-width="1"/><g transform="translate(208,301)"><rect x="0.5" y="0.5" width="12" height="12" fill="#fff" stroke="#8e8f8f"/><rect x="2" y="2" width="9" height="9" fill="url(#cbg)"/></g><rect x="194.5" y="320.5" width="8" height="8" rx="1.2" fill="url(#ebg)" stroke="#8d8d8d"/><path d="M196 324.5H201" stroke="#3c5193" stroke-width="1"/><path d="M198.5 322V327" stroke="#3c5193" stroke-width="1"/><g transform="translate(208,317)"><rect x="0.5" y="0.5" width="12" height="12" fill="#fff" stroke="#8e8f8f"/><rect x="2" y="2" width="9" height="9" fill="url(#cbg)"/></g><rect x="194.5" y="336.5" width="8" height="8" rx="1.2" fill="url(#ebg)" stroke="#8d8d8d"/><path d="M196 340.5H201" stroke="#3c5193" stroke-width="1"/><path d="M198.5 338V343" stroke="#3c5193" stroke-width="1"/><g transform="translate(208,333)"><rect x="0.5" y="0.5" width="12" height="12" fill="#fff" stroke="#8e8f8f"/><rect x="2" y="2" width="9" height="9" fill="url(#cbg)"/></g><rect x="194.5" y="352.5" width="8" height="8" rx="1.2" fill="url(#ebg)" stroke="#8d8d8d"/><path d="M196 356.5H201" stroke="#3c5193" stroke-width="1"/><path d="M198.5 354V359" stroke="#3c5193" stroke-width="1"/><g transform="translate(208,349)"><rect x="0.5" y="0.5" width="12" height="12" fill="#fff" stroke="#8e8f8f"/><rect x="2" y="2" width="9" height="9" fill="url(#cbg)"/></g><rect x="194.5" y="368.5" width="8" height="8" rx="1.2" fill="url(#ebg)" stroke="#8d8d8d"/><path d="M196 372.5H201" stroke="#3c5193" stroke-width="1"/><path d="M198.5 370V375" stroke="#3c5193" stroke-width="1"/><g transform="translate(208,365)"><rect x="0.5" y="0.5" width="12" height="12" fill="#fff" stroke="#8e8f8f"/><rect x="2" y="2" width="9" height="9" fill="url(#cbg)"/></g><rect x="194.5" y="384.5" width="8" height="8" rx="1.2" fill="url(#ebg)" stroke="#8d8d8d"/><path d="M196 388.5H201" stroke="#3c5193" stroke-width="1"/><path d="M198.5 386V391" stroke="#3c5193" stroke-width="1"/><g transform="translate(208,381)"><rect x="0.5" y="0.5" width="12" height="12" fill="#fff" stroke="#8e8f8f"/><rect x="2" y="2" width="9" height="9" fill="url(#cbg)"/></g><rect x="194.5" y="400.5" width="8" height="8" rx="1.2" fill="url(#ebg)" stroke="#8d8d8d"/><path d="M196 404.5H201" stroke="#3c5193" stroke-width="1"/><path d="M198.5 402V407" stroke="#3c5193" stroke-width="1"/><g transform="translate(208,397)"><rect x="0.5" y="0.5" width="12" height="12" fill="#fff" stroke="#8e8f8f"/><rect x="2" y="2" width="9" height="9" fill="url(#cbg)"/></g><rect x="194.5" y="416.5" width="8" height="8" rx="1.2" fill="url(#ebg)" stroke="#8d8d8d"/><path d="M196 420.5H201" stroke="#3c5193" stroke-width="1"/><path d="M198.5 418V423" stroke="#3c5193" stroke-width="1"/><g transform="translate(208,413)"><rect x="0.5" y="0.5" width="12" height="12" fill="#fff" stroke="#8e8f8f"/><rect x="2" y="2" width="9" height="9" fill="url(#cbg)"/></g><g transform="translate(208,429)"><rect x="0.5" y="0.5" width="12" height="12" fill="#fff" stroke="#8e8f8f"/><rect x="2" y="2" width="9" height="9" fill="url(#cbg)"/></g><g transform="translate(208,445)"><rect x="0.5" y="0.5" width="12" height="12" fill="#fff" stroke="#8e8f8f"/><rect x="2" y="2" width="9" height="9" fill="url(#cbg)"/></g><g transform="translate(208,461)"><rect x="0.5" y="0.5" width="12" height="12" fill="#fff" stroke="#8e8f8f"/><rect x="2" y="2" width="9" height="9" fill="url(#cbg)"/></g><rect x="194.5" y="480.5" width="8" height="8" rx="1.2" fill="url(#ebg)" stroke="#8d8d8d"/><path d="M196 484.5H201" stroke="#3c5193" stroke-width="1"/><path d="M198.5 482V487" stroke="#3c5193" stroke-width="1"/><g transform="translate(208,477)"><rect x="0.5" y="0.5" width="12" height="12" fill="#fff" stroke="#8e8f8f"/><rect x="2" y="2" width="9" height="9" fill="url(#cbg)"/></g><rect x="194.5" y="496.5" width="8" height="8" rx="1.2" fill="url(#ebg)" stroke="#8d8d8d"/><path d="M196 500.5H201" stroke="#3c5193" stroke-width="1"/><path d="M198.5 498V503" stroke="#3c5193" stroke-width="1"/><g transform="translate(208,493)"><rect x="0.5" y="0.5" width="12" height="12" fill="#fff" stroke="#8e8f8f"/><rect x="2" y="2" width="9" height="9" fill="url(#cbg)"/><path d="M3.2 6.6 L5.6 9.6 L10 2.6" fill="none" stroke="#4a5f9e" stroke-width="2" stroke-linejoin="round"/></g><rect x="194.5" y="512.5" width="8" height="8" rx="1.2" fill="url(#ebg)" stroke="#8d8d8d"/><path d="M196 516.5H201" stroke="#3c5193" stroke-width="1"/><path d="M198.5 514V519" stroke="#3c5193" stroke-width="1"/><g transform="translate(208,509)"><rect x="0.5" y="0.5" width="12" height="12" fill="#fff" stroke="#8e8f8f"/><rect x="2" y="2" width="9" height="9" fill="url(#cbg)"/><path d="M3.2 6.6 L5.6 9.6 L10 2.6" fill="none" stroke="#4a5f9e" stroke-width="2" stroke-linejoin="round"/></g><rect x="194.5" y="528.5" width="8" height="8" rx="1.2" fill="url(#ebg)" stroke="#8d8d8d"/><path d="M196 532.5H201" stroke="#3c5193" stroke-width="1"/><path d="M198.5 530V535" stroke="#3c5193" stroke-width="1"/><g transform="translate(208,525)"><rect x="0.5" y="0.5" width="12" height="12" fill="#fff" stroke="#8e8f8f"/><rect x="2" y="2" width="9" height="9" fill="url(#cbg)"/><path d="M3.2 6.6 L5.6 9.6 L10 2.6" fill="none" stroke="#4a5f9e" stroke-width="2" stroke-linejoin="round"/></g><rect x="194.5" y="544.5" width="8" height="8" rx="1.2" fill="url(#ebg)" stroke="#8d8d8d"/><path d="M196 548.5H201" stroke="#3c5193" stroke-width="1"/><g transform="translate(208,541)"><rect x="0.5" y="0.5" width="12" height="12" fill="#fff" stroke="#8e8f8f"/><rect x="2" y="2" width="9" height="9" fill="url(#cbg)"/><path d="M3.2 6.6 L5.6 9.6 L10 2.6" fill="none" stroke="#4a5f9e" stroke-width="2" stroke-linejoin="round"/></g><g transform="translate(227,557)"><rect x="0.5" y="0.5" width="12" height="12" fill="#fff" stroke="#8e8f8f"/><rect x="2" y="2" width="9" height="9" fill="url(#cbg)"/><path d="M3.2 6.6 L5.6 9.6 L10 2.6" fill="none" stroke="#4a5f9e" stroke-width="2" stroke-linejoin="round"/></g><g transform="translate(227,573)"><rect x="0.5" y="0.5" width="12" height="12" fill="#fff" stroke="#8e8f8f"/><rect x="2" y="2" width="9" height="9" fill="url(#cbg)"/><path d="M3.2 6.6 L5.6 9.6 L10 2.6" fill="none" stroke="#4a5f9e" stroke-width="2" stroke-linejoin="round"/></g><g transform="translate(227,589)"><rect x="0.5" y="0.5" width="12" height="12" fill="#fff" stroke="#8e8f8f"/><rect x="2" y="2" width="9" height="9" fill="url(#cbg)"/></g><rect x="194.5" y="608.5" width="8" height="8" rx="1.2" fill="url(#ebg)" stroke="#8d8d8d"/><path d="M196 612.5H201" stroke="#3c5193" stroke-width="1"/><path d="M198.5 610V615" stroke="#3c5193" stroke-width="1"/><g transform="translate(208,605)"><rect x="0.5" y="0.5" width="12" height="12" fill="#fff" stroke="#8e8f8f"/><rect x="2" y="2" width="9" height="9" fill="url(#cbg)"/><path d="M3.2 6.6 L5.6 9.6 L10 2.6" fill="none" stroke="#4a5f9e" stroke-width="2" stroke-linejoin="round"/></g><rect x="194.5" y="624.5" width="8" height="8" rx="1.2" fill="url(#ebg)" stroke="#8d8d8d"/><path d="M196 628.5H201" stroke="#3c5193" stroke-width="1"/><g transform="translate(208,621)"><rect x="0.5" y="0.5" width="12" height="12" fill="#fff" stroke="#8e8f8f"/><rect x="2" y="2" width="9" height="9" fill="url(#cbg)"/><path d="M3.2 6.6 L5.6 9.6 L10 2.6" fill="none" stroke="#4a5f9e" stroke-width="2" stroke-linejoin="round"/></g><g transform="translate(227,637)"><rect x="0.5" y="0.5" width="12" height="12" fill="#fff" stroke="#8e8f8f"/><rect x="2" y="2" width="9" height="9" fill="url(#cbg)"/><path d="M3.2 6.6 L5.6 9.6 L10 2.6" fill="none" stroke="#4a5f9e" stroke-width="2" stroke-linejoin="round"/></g><g transform="translate(227,653)"><rect x="0.5" y="0.5" width="12" height="12" fill="#fff" stroke="#8e8f8f"/><rect x="2" y="2" width="9" height="9" fill="url(#cbg)"/><path d="M3.2 6.6 L5.6 9.6 L10 2.6" fill="none" stroke="#4a5f9e" stroke-width="2" stroke-linejoin="round"/></g><g transform="translate(227,669)"><rect x="0.5" y="0.5" width="12" height="12" fill="#fff" stroke="#8e8f8f"/><rect x="2" y="2" width="9" height="9" fill="url(#cbg)"/></g><g transform="translate(208,685)"><rect x="0.5" y="0.5" width="12" height="12" fill="#fff" stroke="#8e8f8f"/><rect x="2" y="2" width="9" height="9" fill="url(#cbg)"/><path d="M3.2 6.6 L5.6 9.6 L10 2.6" fill="none" stroke="#4a5f9e" stroke-width="2" stroke-linejoin="round"/></g><g transform="translate(208,701)"><rect x="0.5" y="0.5" width="12" height="12" fill="#fff" stroke="#8e8f8f"/><rect x="2" y="2" width="9" height="9" fill="url(#cbg)"/><path d="M3.2 6.6 L5.6 9.6 L10 2.6" fill="none" stroke="#4a5f9e" stroke-width="2" stroke-linejoin="round"/></g><g transform="translate(208,717)"><rect x="0.5" y="0.5" width="12" height="12" fill="#fff" stroke="#8e8f8f"/><rect x="2" y="2" width="9" height="9" fill="url(#cbg)"/><path d="M3.2 6.6 L5.6 9.6 L10 2.6" fill="none" stroke="#4a5f9e" stroke-width="2" stroke-linejoin="round"/></g><g transform="translate(208,733)"><rect x="0.5" y="0.5" width="12" height="12" fill="#fff" stroke="#8e8f8f"/><rect x="2" y="2" width="9" height="9" fill="url(#cbg)"/><path d="M3.2 6.6 L5.6 9.6 L10 2.6" fill="none" stroke="#4a5f9e" stroke-width="2" stroke-linejoin="round"/></g><g transform="translate(208,749)"><rect x="0.5" y="0.5" width="12" height="12" fill="#fff" stroke="#8e8f8f"/><rect x="2" y="2" width="9" height="9" fill="url(#cbg)"/><path d="M3.2 6.6 L5.6 9.6 L10 2.6" fill="none" stroke="#4a5f9e" stroke-width="2" stroke-linejoin="round"/></g><g transform="translate(208,765)"><rect x="0.5" y="0.5" width="12" height="12" fill="#fff" stroke="#8e8f8f"/><rect x="2" y="2" width="9" height="9" fill="url(#cbg)"/><path d="M3.2 6.6 L5.6 9.6 L10 2.6" fill="none" stroke="#4a5f9e" stroke-width="2" stroke-linejoin="round"/></g><rect x="202" y="236" width="43" height="16" fill="#3399ff"/></svg><div class="t" style="left:204px;top:237.84px;font-size:12px;line-height:12px;transform:scaleX(0.8614);transform-origin:0 0;color:#fff">Program</div><div class="t" style="left:204px;top:253.84px;font-size:12px;line-height:12px;transform:scaleX(0.885);transform-origin:0 0;">Dokumenty</div><div class="t" style="left:223px;top:269.84px;font-size:12px;line-height:12px;transform:scaleX(0.8803);transform-origin:0 0;">Przyjęcia na magazyn (PZ)</div><div class="t" style="left:223px;top:285.84px;font-size:12px;line-height:12px;transform:scaleX(0.8861);transform-origin:0 0;">Wydania z magazynu (WZ)</div><div class="t" style="left:223px;top:301.84px;font-size:12px;line-height:12px;transform:scaleX(0.8938);transform-origin:0 0;">Zwroty do dostawcy (Korekta PZ)</div><div class="t" style="left:223px;top:317.84px;font-size:12px;line-height:12px;transform:scaleX(0.8989);transform-origin:0 0;">Zwroty od odbiorcy (Korekta WZ)</div><div class="t" style="left:223px;top:333.84px;font-size:12px;line-height:12px;transform:scaleX(0.8869);transform-origin:0 0;">Korekty stanu magazynu</div><div class="t" style="left:223px;top:349.84px;font-size:12px;line-height:12px;transform:scaleX(0.8743);transform-origin:0 0;">Przesunięcia międzymagazynowe (MM)</div><div class="t" style="left:223px;top:365.84px;font-size:12px;line-height:12px;transform:scaleX(0.898);transform-origin:0 0;">Przeceny</div><div class="t" style="left:223px;top:381.84px;font-size:12px;line-height:12px;transform:scaleX(0.8961);transform-origin:0 0;">Przychody wewnętrzne (PW)</div><div class="t" style="left:223px;top:397.84px;font-size:12px;line-height:12px;transform:scaleX(0.908);transform-origin:0 0;">Rozchody wewnętrzne (RW)</div><div class="t" style="left:223px;top:413.84px;font-size:12px;line-height:12px;transform:scaleX(0.8944);transform-origin:0 0;">Remanent</div><div class="t" style="left:223px;top:429.84px;font-size:12px;line-height:12px;transform:scaleX(0.8777);transform-origin:0 0;">Edytor szablonów</div><div class="t" style="left:223px;top:445.84px;font-size:12px;line-height:12px;transform:scaleX(0.8869);transform-origin:0 0;">Zmiana daty dokumentów</div><div class="t" style="left:223px;top:461.84px;font-size:12px;line-height:12px;transform:scaleX(0.895);transform-origin:0 0;">Widoczność cen w magazynie</div><div class="t" style="left:223px;top:477.84px;font-size:12px;line-height:12px;transform:scaleX(0.8953);transform-origin:0 0;">Kompletacje</div><div class="t" style="left:223px;top:493.84px;font-size:12px;line-height:12px;transform:scaleX(0.8792);transform-origin:0 0;">Zamówienia od odbiorcy</div><div class="t" style="left:223px;top:509.84px;font-size:12px;line-height:12px;transform:scaleX(0.8874);transform-origin:0 0;">Zamówienia do dostawcy</div><div class="t" style="left:223px;top:525.84px;font-size:12px;line-height:12px;transform:scaleX(0.8563);transform-origin:0 0;">Oferty</div><div class="t" style="left:223px;top:541.84px;font-size:12px;line-height:12px;transform:scaleX(0.8769);transform-origin:0 0;">Faktury</div><div class="t" style="left:242px;top:557.84px;font-size:12px;line-height:12px;transform:scaleX(0.8857);transform-origin:0 0;">Dodaj FV</div><div class="t" style="left:242px;top:573.84px;font-size:12px;line-height:12px;transform:scaleX(0.8706);transform-origin:0 0;">Edytuj FV</div><div class="t" style="left:242px;top:589.84px;font-size:12px;line-height:12px;transform:scaleX(0.8804);transform-origin:0 0;">Usuń FV</div><div class="t" style="left:223px;top:605.84px;font-size:12px;line-height:12px;transform:scaleX(0.889);transform-origin:0 0;">Faktury korygujące</div><div class="t" style="left:223px;top:621.84px;font-size:12px;line-height:12px;transform:scaleX(0.8689);transform-origin:0 0;">Faktury proforma</div><div class="t" style="left:242px;top:637.84px;font-size:12px;line-height:12px;transform:scaleX(0.9017);transform-origin:0 0;">Dodaj PRO</div><div class="t" style="left:242px;top:653.84px;font-size:12px;line-height:12px;transform:scaleX(0.882);transform-origin:0 0;">Edytuj PRO</div><div class="t" style="left:242px;top:669.84px;font-size:12px;line-height:12px;transform:scaleX(0.9);transform-origin:0 0;">Usuń PRO</div><div class="t" style="left:223px;top:685.84px;font-size:12px;line-height:12px;transform:scaleX(0.8792);transform-origin:0 0;">Kreator dokumentu sprzedaży</div><div class="t" style="left:223px;top:701.84px;font-size:12px;line-height:12px;transform:scaleX(0.8978);transform-origin:0 0;">Widoczność cen zakupu na dokumentach sprzedaży</div><div class="t" style="left:223px;top:717.84px;font-size:12px;line-height:12px;transform:scaleX(0.8826);transform-origin:0 0;">Zmiana numeru dokumentów</div><div class="t" style="left:223px;top:733.84px;font-size:12px;line-height:12px;transform:scaleX(0.897);transform-origin:0 0;">Widoczność cen zakupu w magazynie</div><div class="t" style="left:223px;top:749.84px;font-size:12px;line-height:12px;transform:scaleX(0.8849);transform-origin:0 0;">Kreator zamówień do dostawcy</div><div class="t" style="left:223px;top:765.84px;font-size:12px;line-height:12px;transform:scaleX(0.8944);transform-origin:0 0;">Kreator faktur</div><div class="a" style="left:165px;top:234px;width:335px;height:543px;border:1px solid #828790"></div><div class="a" style="left:482px;top:235px;width:17px;height:541px;background:linear-gradient(90deg,#e8e8e8,#f0f0f0 15%,#f0f0f0 85%,#fafafa)"></div><svg class="a" style="left:482px;top:235px" width="17" height="541"><defs><linearGradient id="thg" x1="0" x2="1"><stop offset="0" stop-color="#f6f6f6"/><stop offset=".45" stop-color="#ececec"/><stop offset=".5" stop-color="#dadadb"/><stop offset="1" stop-color="#c9c9cb"/></linearGradient></defs><path d="M4.5 12 L8.5 8 L12.5 12Z" fill="#3a3a3a"/><rect x="0.5" y="19.5" width="14" height="394" rx="2" fill="url(#thg)" stroke="#8f8f8f"/><path d="M4 212.5h7M4 215.5h7M4 218.5h7" stroke="#404040"/><path d="M5 529.5 L8.5 533.5 L12 529.5Z" fill="#3a3a3a"/></svg><div class="a" style="left:511px;top:120px;width:471px;height:560px;background:#4f4f4f;border-radius:6px 6px 0 0"></div><div class="a" style="left:512px;top:121px;width:469px;height:558px;background:linear-gradient(#bfcfe2 0px,#d5e2f0 28px,#d7e4f2 100%);border-radius:5px 5px 0 0;border-top:1px solid #eef3f9;border-left:1px solid #eaf1f8"></div><svg class="a" style="left:522px;top:129px" width="17" height="15" viewBox="0 0 17 15"><defs><linearGradient id="gUr" x1="0" y1="0" x2="0" y2="1"><stop offset="0" stop-color="#f04030"/><stop offset="1" stop-color="#c01808"/></linearGradient></defs><circle cx="10.5" cy="2.5" r="2.1" fill="#9a9a9a"/><path d="M6.8 11.6 Q7 5.3 10.8 5.3 Q14.6 5.3 14.9 11.6Z" fill="url(#gUr)"/><polygon points="8.70,10.60 8.62,11.46 7.26,11.82 6.96,12.38 7.41,13.71 6.74,14.26 5.52,13.56 4.92,13.74 4.30,15.00 3.44,14.92 3.08,13.56 2.52,13.26 1.19,13.71 0.64,13.04 1.34,11.82 1.16,11.22 -0.10,10.60 -0.02,9.74 1.34,9.38 1.64,8.82 1.19,7.49 1.86,6.94 3.08,7.64 3.68,7.46 4.30,6.20 5.16,6.28 5.52,7.64 6.08,7.94 7.41,7.49 7.96,8.16 7.26,9.38 7.44,9.98" fill="#1f6fc8"/><circle cx="4.3" cy="10.6" r="1.5" fill="#fff"/></svg><div class="t" style="left:541px;top:131.84px;font-size:12px;line-height:12px;color:#404a58;">Użytkownicy</div><div class="a" style="left:875px;top:129px;width:31px;height:17px;background:linear-gradient(#dde6f1 0%,#d6e1ee 45%,#cbd8e8 50%,#d3dfed 100%);border:1px solid #8d9db4;border-radius:3px;box-shadow:inset 0 0 0 1px rgba(255,255,255,.3)"></div><div class="a" style="left:908px;top:129px;width:31px;height:17px;background:linear-gradient(#dde6f1 0%,#d6e1ee 45%,#cbd8e8 50%,#d3dfed 100%);border:1px solid #8d9db4;border-radius:3px;box-shadow:inset 0 0 0 1px rgba(255,255,255,.3)"></div><div class="a" style="left:941px;top:129px;width:31px;height:17px;background:linear-gradient(#dde6f1 0%,#d6e1ee 45%,#cbd8e8 50%,#d3dfed 100%);border:1px solid #8d9db4;border-radius:3px;box-shadow:inset 0 0 0 1px rgba(255,255,255,.3)"></div><div class="a" style="left:885px;top:137px;width:11px;height:5px;background:#f4f7fb;border:1px solid #55667c;border-radius:1.5px"></div><div class="a" style="left:918px;top:133px;width:11px;height:9px;background:#f4f7fb;border:1px solid #55667c;border-radius:1.5px"></div><div class="a" style="left:921px;top:136px;width:5px;height:3px;background:#8aa6c8;border:1px solid #55667c"></div><svg class="a" style="left:941px;top:129px" width="31" height="17" viewBox="0 0 31 17"><path d="M12.2 5.6 L18.8 11.4 M18.8 5.6 L12.2 11.4" stroke="#55667c" stroke-width="4.4" stroke-linecap="round"/><path d="M12.2 5.6 L18.8 11.4 M18.8 5.6 L12.2 11.4" stroke="#f4f7fb" stroke-width="2.4" stroke-linecap="round"/></svg><div class="a" style="left:519px;top:149px;width:455px;height:530px;background:#f0f0f0"></div><div class="a" style="left:519px;top:149px;width:455px;height:25px;background:linear-gradient(#fdfdfd,#f3f3f3 60%,#ececec)"></div><svg class="a" style="left:522px;top:153px" width="3" height="16" viewBox="0 0 3 16"><rect x="0" y="0" width="2" height="2" fill="#b0b0b0"/><rect x="0" y="3" width="2" height="2" fill="#b0b0b0"/><rect x="0" y="6" width="2" height="2" fill="#b0b0b0"/><rect x="0" y="9" width="2" height="2" fill="#b0b0b0"/><rect x="0" y="12" width="2" height="2" fill="#b0b0b0"/></svg><svg class="a" style="left:532px;top:156px" width="12" height="12" viewBox="0 0 12 12"><path d="M4.5 0.5H7.5V4.5H11.5V7.5H7.5V11.5H4.5V7.5H0.5V4.5H4.5Z" fill="#fae27c" stroke="#b8901a"/></svg><svg class="a" style="left:588px;top:154px" width="17" height="15" viewBox="0 0 17 15"><defs><linearGradient id="gPen" x1="0" y1="0" x2="1" y2="1"><stop offset="0" stop-color="#fff3a0"/><stop offset="1" stop-color="#e8b820"/></linearGradient></defs><path d="M1.2 13.2 L2.6 9.2 L11.8 1.2 Q13.6 -0.2 15.2 1.6 Q16.4 3.2 14.8 4.6 L5.4 12.4Z" fill="url(#gPen)" stroke="#9a6a20" stroke-width=".9" stroke-linejoin="round"/><path d="M1.2 13.2 L2.6 9.2 L5.4 12.4Z" fill="#f0d0a0" stroke="#9a6a20" stroke-width=".7"/><path d="M1.2 13.2 L1.9 11.3 L3.2 12.6Z" fill="#4a3a20"/><path d="M11 1.9 L14.3 5" stroke="#e8a080" stroke-width="1.6"/></svg><svg class="a" style="left:649px;top:154px" width="14" height="14" viewBox="0 0 14 14"><path d="M1.2 1.2 Q6 6 12.6 12.8 M12.8 1.2 Q7 6.5 1.6 12.8" fill="none" stroke="#e8281c" stroke-width="2.1" stroke-linecap="round"/></svg><svg class="a" style="left:701px;top:152px" width="17" height="17" viewBox="0 0 17 17"><defs><linearGradient id="gPr" x1="0" y1="0" x2="0" y2="1"><stop offset="0" stop-color="#f4f4f4"/><stop offset=".5" stop-color="#b8b8b8"/><stop offset="1" stop-color="#8a8a8a"/></linearGradient></defs><path d="M4.2 1 H10.5 L13 3.5 V8 H4.2Z" fill="#dceaf8" stroke="#4f88c8" stroke-width=".9"/><rect x="0.6" y="6.6" width="15.4" height="8.2" rx="2.2" fill="url(#gPr)" stroke="#3a3a3a" stroke-width=".9"/><rect x="3.5" y="9.5" width="9.6" height="2" fill="#d8d8d8"/><path d="M4.2 13.2 H12.8 V16 H4.2Z" fill="#fff" stroke="#4f88c8" stroke-width=".9"/></svg><svg class="a" style="left:764px;top:153px" width="17" height="17" viewBox="0 0 17 17"><defs><linearGradient id="gXl" x1="0" y1="0" x2="1" y2="1"><stop offset="0" stop-color="#f4faf2"/><stop offset="1" stop-color="#bcd8b8"/></linearGradient></defs><rect x="0.6" y="0.6" width="15.8" height="15.8" fill="#2a6a2a"/><rect x="1.8" y="1.8" width="13.4" height="13.4" fill="url(#gXl)"/><path d="M3.6 3.8 L13.2 12.4 M13.2 3.8 L3.6 12.4" stroke="#1f7a2a" stroke-width="3.2"/><path d="M3.6 3.8 L13.2 12.4 M13.2 3.8 L3.6 12.4" stroke="#5cc060" stroke-width="1.6"/><path d="M1.8 13.6 H15.2" stroke="#e8f0e8" stroke-width="1"/></svg><div class="t" style="left:549px;top:154.84px;font-size:12px;line-height:12px;;"><u>D</u>odaj</div><div class="t" style="left:607px;top:154.84px;font-size:12px;line-height:12px;;"><u>E</u>dytuj</div><div class="t" style="left:667px;top:154.84px;font-size:12px;line-height:12px;;"><u>U</u>suń</div><div class="t" style="left:721px;top:154.84px;font-size:12px;line-height:12px;;">D<u>r</u>ukuj</div><div class="t" style="left:783px;top:154.84px;font-size:12px;line-height:12px;;letter-spacing:-0.3px;">Eksport do E<u>x</u>cela</div><div class="a" style="left:519px;top:174px;width:455px;height:510px;background:#ababab;border:1px solid #575757"></div><div class="a" style="left:520px;top:175px;width:117px;height:34px;background:linear-gradient(#fff 0,#fff 45%,#f4f5f7 50%,#eff0f2 100%);border-right:1px solid #e0e0e0;border-bottom:1px solid #a9a9a9"></div><div class="a" style="left:637px;top:175px;width:68px;height:34px;background:linear-gradient(#fff 0,#fff 45%,#f4f5f7 50%,#eff0f2 100%);border-right:1px solid #e0e0e0;border-bottom:1px solid #a9a9a9"></div><div class="a" style="left:705px;top:175px;width:58px;height:34px;background:linear-gradient(#fff 0,#fff 45%,#f4f5f7 50%,#eff0f2 100%);border-right:1px solid #e0e0e0;border-bottom:1px solid #a9a9a9"></div><div class="a" style="left:763px;top:175px;width:59px;height:34px;background:linear-gradient(#fff 0,#fff 45%,#f4f5f7 50%,#eff0f2 100%);border-right:1px solid #e0e0e0;border-bottom:1px solid #a9a9a9"></div><div class="a" style="left:520px;top:209px;width:117px;height:22px;background:#fff;border-right:1px solid #a0a0a0;border-bottom:1px solid #a0a0a0"></div><div class="t" style="left:524px;top:213.84px;font-size:12px;line-height:12px;transform:scaleX(0.8366);transform-origin:0 0;">Administrator</div><div class="a" style="left:637px;top:209px;width:68px;height:22px;background:#fff;border-right:1px solid #a0a0a0;border-bottom:1px solid #a0a0a0"></div><div class="t" style="left:641px;top:213.84px;font-size:12px;line-height:12px;transform:scaleX(0.8366);transform-origin:0 0;">Administrator</div><div class="a" style="left:705px;top:209px;width:58px;height:22px;background:#fff;border-right:1px solid #a0a0a0;border-bottom:1px solid #a0a0a0"></div><div class="t" style="left:709px;top:213.84px;font-size:12px;line-height:12px;transform:scaleX(0.8850);transform-origin:0 0;"></div><div class="a" style="left:763px;top:209px;width:59px;height:22px;background:#fff;border-right:1px solid #a0a0a0;border-bottom:1px solid #a0a0a0"></div><div class="t" style="left:767px;top:213.84px;font-size:12px;line-height:12px;transform:scaleX(0.8281);transform-origin:0 0;">Polski</div><div class="a" style="left:520px;top:231px;width:117px;height:22px;background:#3399ff;border-right:1px solid #a0a0a0;border-bottom:1px solid #a0a0a0"></div><div class="t" style="left:524px;top:235.84px;font-size:12px;line-height:12px;transform:scaleX(0.8643);transform-origin:0 0;color:#fff">Jan Kowalski</div><div class="a" style="left:637px;top:231px;width:68px;height:22px;background:#3399ff;border-right:1px solid #a0a0a0;border-bottom:1px solid #a0a0a0"></div><div class="t" style="left:641px;top:235.84px;font-size:12px;line-height:12px;transform:scaleX(0.8935);transform-origin:0 0;color:#fff">Handlowiec</div><div class="a" style="left:705px;top:231px;width:58px;height:22px;background:#3399ff;border-right:1px solid #a0a0a0;border-bottom:1px solid #a0a0a0"></div><div class="t" style="left:709px;top:235.84px;font-size:12px;line-height:12px;transform:scaleX(0.8850);transform-origin:0 0;color:#fff">Jan</div><div class="a" style="left:763px;top:231px;width:59px;height:22px;background:#3399ff;border-right:1px solid #a0a0a0;border-bottom:1px solid #a0a0a0"></div><div class="t" style="left:767px;top:235.84px;font-size:12px;line-height:12px;transform:scaleX(0.8281);transform-origin:0 0;color:#fff">Polski</div><div class="t" style="left:529px;top:179.84px;font-size:12px;line-height:12px;transform:scaleX(0.8850);transform-origin:0 0;">Nazwa</div><div class="t" style="left:529px;top:192.84px;font-size:12px;line-height:12px;transform:scaleX(0.8850);transform-origin:0 0;">użytkownika</div><div class="t" style="left:644px;top:186.84px;font-size:12px;line-height:12px;transform:scaleX(0.8850);transform-origin:0 0;">Rola</div><div class="t" style="left:712px;top:186.84px;font-size:12px;line-height:12px;transform:scaleX(0.8850);transform-origin:0 0;">Login</div><div class="t" style="left:770px;top:186.84px;font-size:12px;line-height:12px;transform:scaleX(0.8850);transform-origin:0 0;">Język</div><div class="a" style="left:503px;top:251px;width:510px;height:448px;background:#1e1e1e;border-radius:6px 6px 0 0"></div><div class="a" style="left:504px;top:252px;width:508px;height:446px;background:linear-gradient(#98b4d5 0px,#b9d2ea 29px,#b9d1ea 100%);border-radius:5px 5px 0 0;border-top:1px solid #f4f8fc;border-left:1px solid #dfe9f5"></div><div class="a" style="left:1011px;top:255px;width:1px;height:443px;background:#4ad9f5"></div><div class="a" style="left:504px;top:697px;width:508px;height:1px;background:#4ad9f5"></div><div class="t" style="left:515px;top:263.84px;font-size:12px;line-height:12px;;">Modyfikacja użytkownika</div><div class="a" style="left:906px;top:261px;width:31px;height:17px;background:linear-gradient(#d3e2f2 0%,#c2d6ec 45%,#a4bfdc 50%,#b0c8e2 80%,#c7daee 100%);border:1px solid #5f7190;border-radius:3px;box-shadow:inset 0 0 0 1px rgba(255,255,255,.3)"></div><div class="a" style="left:939px;top:261px;width:31px;height:17px;background:linear-gradient(#d3e2f2 0%,#c2d6ec 45%,#a4bfdc 50%,#b0c8e2 80%,#c7daee 100%);border:1px solid #5f7190;border-radius:3px;box-shadow:inset 0 0 0 1px rgba(255,255,255,.3)"></div><div class="a" style="left:972px;top:261px;width:31px;height:17px;background:linear-gradient(#eaa99b 0%,#dc8a77 45%,#c84d33 50%,#c55a3f 80%,#d27a5c 100%);border:1px solid #4e1b1b;border-radius:3px;box-shadow:inset 0 0 0 1px rgba(255,255,255,.3)"></div><div class="a" style="left:916px;top:269px;width:11px;height:5px;background:#fff;border:1px solid #3c4a5e;border-radius:1.5px"></div><div class="a" style="left:949px;top:265px;width:11px;height:9px;background:#fff;border:1px solid #3c4a5e;border-radius:1.5px"></div><div class="a" style="left:952px;top:268px;width:5px;height:3px;background:#8aa6c8;border:1px solid #3c4a5e"></div><svg class="a" style="left:972px;top:261px" width="31" height="17" viewBox="0 0 31 17"><path d="M12.2 5.6 L18.8 11.4 M18.8 5.6 L12.2 11.4" stroke="#3a3a3a" stroke-width="4.4" stroke-linecap="round"/><path d="M12.2 5.6 L18.8 11.4 M18.8 5.6 L12.2 11.4" stroke="#fff" stroke-width="2.4" stroke-linecap="round"/></svg><div class="a" style="left:511px;top:281px;width:494px;height:410px;background:#f0f0f0"></div><div class="t" style="right:400px;top:299.84px;font-size:12px;line-height:12px;transform:scaleX(0.8854);transform-origin:100% 0;">Poprzednie hasło:</div><div class="a" style="left:634px;top:296px;width:192px;height:20px;background:#f0f0f0;border:1px solid #c9c9c9;border-radius:2px"></div><div class="a" style="left:527px;top:340px;width:305px;height:342px;border:1px solid #fff;border-radius:3px"></div><div class="a" style="left:526px;top:339px;width:307px;height:342px;border:1px solid #d5dfe5;border-radius:3px"></div><div class="a" style="left:532px;top:333px;width:82px;height:10px;background:#f0f0f0"></div><div class="t" style="left:535px;top:332.84px;font-size:12px;line-height:12px;transform:scaleX(0.8779);transform-origin:0 0;">Zmienione dane</div><div class="t" style="right:385px;top:360.84px;font-size:12px;line-height:12px;transform:scaleX(0.8963);transform-origin:100% 0;">Nazwa użytkownika:</div><div class="a" style="left:649px;top:357px;width:177px;height:20px;background:#fff;border:1px solid #e3e9ef;border-top-color:#abadb3;border-radius:2px"></div><div class="t" style="left:652px;top:360.84px;font-size:12px;line-height:12px;transform:scaleX(0.8643);transform-origin:0 0;">Jan Kowalski</div><div class="t" style="right:385px;top:389.84px;font-size:12px;line-height:12px;transform:scaleX(0.8357);transform-origin:100% 0;">Rola:</div><div class="a" style="left:649px;top:385px;width:178px;height:21px;background:linear-gradient(#f2f2f2 0,#ebebeb 50%,#dddddd 51%,#cfcfcf 100%);border:1px solid #707070;border-radius:3px"></div><div class="t" style="left:653px;top:389.84px;font-size:12px;line-height:12px;transform:scaleX(0.8935);transform-origin:0 0;">Handlowiec</div><svg class="a" style="left:813px;top:393px" width="8" height="5"><path d="M0 0H7L3.5 4Z" fill="#000"/></svg><div class="t" style="right:381px;top:418.84px;font-size:12px;line-height:12px;transform:scaleX(0.8628);transform-origin:100% 0;">Język interfejsu:</div><div class="a" style="left:649px;top:414px;width:177px;height:21px;background:linear-gradient(#e8f5fc 0,#d6eefb 50%,#b4def6 51%,#94cbee 100%);border:1px solid #3c7fb1;border-radius:3px"></div><div class="t" style="left:653px;top:418.84px;font-size:12px;line-height:12px;transform:scaleX(0.8281);transform-origin:0 0;">Polski</div><svg class="a" style="left:813px;top:422px" width="8" height="5"><path d="M0 0H7L3.5 4Z" fill="#000"/></svg><svg class="a" style="left:533px;top:454px" width="13" height="13" viewBox="0 0 13 13"><defs><linearGradient id="cbgx" x1="0" y1="0" x2="1" y2="1"><stop offset="0" stop-color="#cdd0d4"/><stop offset="1" stop-color="#f6f6f6"/></linearGradient></defs><rect x="0.5" y="0.5" width="12" height="12" fill="#fff" stroke="#8e8f8f"/><rect x="2" y="2" width="9" height="9" fill="url(#cbgx)"/><path d="M3.2 6.6 L5.6 9.6 L10 2.6" fill="none" stroke="#4a5f9e" stroke-width="2" stroke-linejoin="round"/></svg><div class="t" style="left:552px;top:454.84px;font-size:12px;line-height:12px;transform:scaleX(0.8733);transform-origin:0 0;">Aktywny</div><svg class="a" style="left:532px;top:483px" width="13" height="13" viewBox="0 0 13 13"><defs><linearGradient id="cbgx" x1="0" y1="0" x2="1" y2="1"><stop offset="0" stop-color="#cdd0d4"/><stop offset="1" stop-color="#f6f6f6"/></linearGradient></defs><rect x="0.5" y="0.5" width="12" height="12" fill="#fff" stroke="#8e8f8f"/><rect x="2" y="2" width="9" height="9" fill="url(#cbgx)"/></svg><div class="t" style="left:551px;top:483.84px;font-size:12px;line-height:12px;transform:scaleX(0.8780);transform-origin:0 0;">Modyfikuj login i hasło</div><div class="a" style="left:533px;top:522px;width:290px;height:141px;border:1px solid #fff;border-radius:3px"></div><div class="a" style="left:532px;top:521px;width:292px;height:141px;border:1px solid #d5dfe5;border-radius:3px"></div><div class="a" style="left:538px;top:515px;width:60px;height:10px;background:#f0f0f0"></div><div class="t" style="left:541px;top:515.84px;font-size:12px;line-height:12px;transform:scaleX(0.8571);transform-origin:0 0;color:#a0a0a0">Autoryzacja</div><div class="t" style="right:385px;top:544.34px;font-size:12px;line-height:12px;transform:scaleX(0.8850);transform-origin:100% 0;color:#a0a0a0;letter-spacing:0">Login:</div><div class="a" style="left:649px;top:540px;width:155px;height:20px;background:#f0f0f0;border:1px solid #acacac;border-radius:2px"></div><div class="t" style="left:652px;top:544.34px;font-size:12px;line-height:12px;transform:scaleX(0.8850);transform-origin:0 0;color:#6d6d6d">Jan</div><div class="t" style="right:385px;top:586.34px;font-size:12px;line-height:12px;transform:scaleX(0.8850);transform-origin:100% 0;color:#a0a0a0;letter-spacing:0">Nowe hasło:</div><div class="a" style="left:649px;top:582px;width:155px;height:20px;background:#f0f0f0;border:1px solid #acacac;border-radius:2px"></div><div class="t" style="right:385px;top:628.34px;font-size:12px;line-height:12px;transform:scaleX(0.8850);transform-origin:100% 0;color:#a0a0a0;letter-spacing:0">Powtórz hasło:</div><div class="a" style="left:649px;top:624px;width:155px;height:20px;background:#f0f0f0;border:1px solid #acacac;border-radius:2px"></div><div class="a" style="left:830px;top:310px;width:175px;height:22px;overflow:hidden"><div class="t" style="left:10px;top:6.84px;font-size:12px;line-height:12px;transform:scaleX(0.885);transform-origin:0 0">Uprawnienia użytkownika do magazynów:</div></div><div class="a" style="left:839px;top:332px;width:153px;height:304px;background:#fff;border:1px solid #828790"></div><svg class="a" style="left:842px;top:335px" width="13" height="13" viewBox="0 0 13 13"><defs><linearGradient id="cbgx" x1="0" y1="0" x2="1" y2="1"><stop offset="0" stop-color="#cdd0d4"/><stop offset="1" stop-color="#f6f6f6"/></linearGradient></defs><rect x="0.5" y="0.5" width="12" height="12" fill="#fff" stroke="#8e8f8f"/><rect x="2" y="2" width="9" height="9" fill="url(#cbgx)"/><path d="M3.2 6.6 L5.6 9.6 L10 2.6" fill="none" stroke="#4a5f9e" stroke-width="2" stroke-linejoin="round"/></svg><div class="t" style="left:861px;top:334.84px;font-size:12px;line-height:12px;transform:scaleX(0.8863);transform-origin:0 0;">Magazyn Testowy</div><div class="a" style="left:838px;top:657px;width:73px;height:21px;background:linear-gradient(#f2f2f2 0,#ebebeb 50%,#dddddd 51%,#cfcfcf 100%);border:1px solid #3c7fb1;border-radius:3px;box-shadow:inset 0 0 0 1px #5ed1f5"></div><div class="t" style="left:866px;top:661.84px;font-size:12px;line-height:12px;transform:scaleX(0.8824);transform-origin:0 0;">OK</div><div class="a" style="left:919px;top:657px;width:73px;height:21px;background:linear-gradient(#f2f2f2 0,#ebebeb 50%,#dddddd 51%,#cfcfcf 100%);border:1px solid #707070;border-radius:3px"></div><div class="t" style="left:941px;top:661.84px;font-size:12px;line-height:12px;transform:scaleX(0.8636);transform-origin:0 0;">Anuluj</div><svg class="a" style="left:995px;top:680px" width="10" height="8" viewBox="0 0 10 8"><rect x="8" y="0" width="2" height="2" fill="#b8b8b8"/><rect x="8" y="3" width="2" height="2" fill="#b8b8b8"/><rect x="5" y="3" width="2" height="2" fill="#b8b8b8"/><rect x="8" y="6" width="2" height="2" fill="#b8b8b8"/><rect x="5" y="6" width="2" height="2" fill="#b8b8b8"/><rect x="2" y="6" width="2" height="2" fill="#b8b8b8"/></svg><div class="a" style="left:653px;top:438px;width:176px;height:41px;background:rgba(0,0,0,.18);filter:blur(1.5px)"></div><div class="a" style="left:650px;top:435px;width:176px;height:41px;background:#fff;border:1px solid #646464"></div><div class="a" style="left:651px;top:436px;width:174px;height:13px;background:#3399ff"></div><div class="t" style="left:653px;top:436.84px;font-size:12px;line-height:12px;transform:scaleX(0.8281);transform-origin:0 0;color:#fff">Polski</div><div class="t" style="left:653px;top:449.84px;font-size:12px;line-height:12px;transform:scaleX(0.8850);transform-origin:0 0;">English</div><div class="t" style="left:653px;top:462.84px;font-size:12px;line-height:12px;transform:scaleX(0.8850);transform-origin:0 0;">Русский</div></body></html>
